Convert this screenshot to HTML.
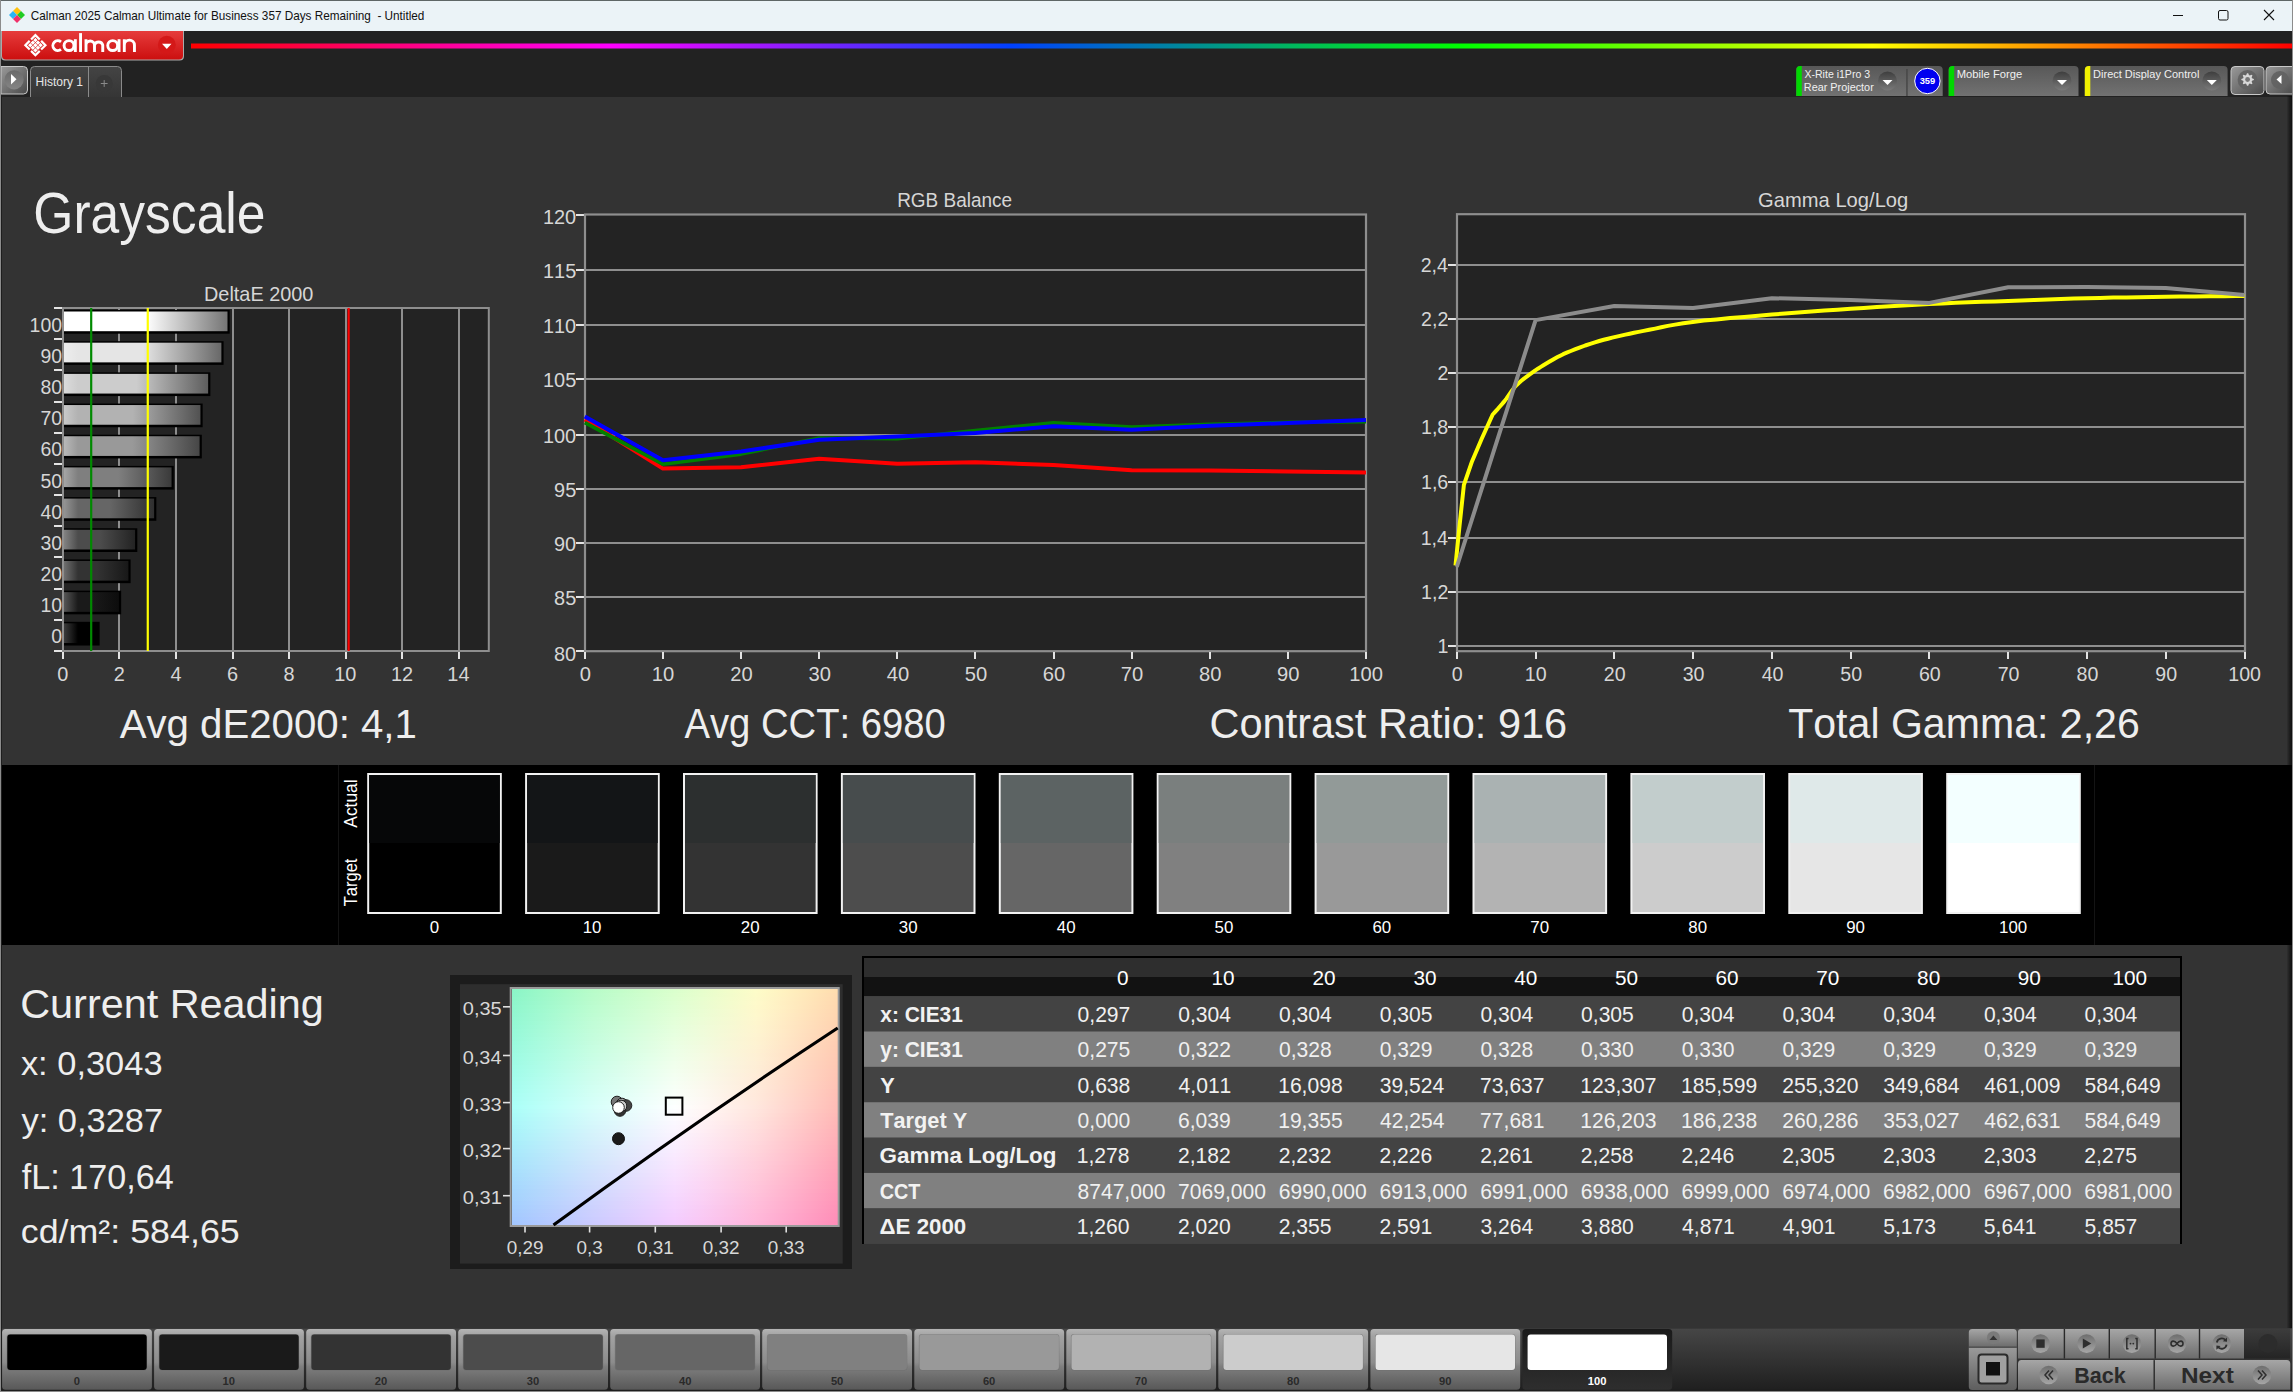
<!DOCTYPE html>
<html><head><meta charset="utf-8"><title>Calman</title>
<style>
html,body{margin:0;padding:0;background:#333;}
body{width:2293px;height:1392px;overflow:hidden;}
svg{display:block;font-family:"Liberation Sans",sans-serif;font-kerning:none;}
text{white-space:pre;}
</style></head><body>
<svg width="2293" height="1392" viewBox="0 0 2293 1392">
<defs>
<linearGradient id="redg" x1="0" y1="0" x2="0" y2="1"><stop offset="0" stop-color="#e63c3c"/><stop offset="1" stop-color="#cc0f0f"/></linearGradient>
<radialGradient id="ddred" cx="0.5" cy="0.5" r="0.5"><stop offset="0" stop-color="#d31c1c"/><stop offset="0.8" stop-color="#d82020"/><stop offset="1" stop-color="#e03a3a"/></radialGradient>
<linearGradient id="rainbow" x1="191" y1="0" x2="2293" y2="0" gradientUnits="userSpaceOnUse"><stop offset="0" stop-color="#ff0000"/><stop offset="0.2" stop-color="#ff00ff"/><stop offset="0.39" stop-color="#0040ff"/><stop offset="0.48" stop-color="#009090"/><stop offset="0.605" stop-color="#00ff00"/><stop offset="0.8" stop-color="#ffff00"/><stop offset="0.88" stop-color="#ff9900"/><stop offset="1" stop-color="#ff0000"/></linearGradient>
<linearGradient id="wg" x1="0" y1="0" x2="0" y2="1"><stop offset="0" stop-color="#585858"/><stop offset="1" stop-color="#727272"/></linearGradient>
<linearGradient id="ddc" x1="0" y1="0" x2="0" y2="1"><stop offset="0" stop-color="#3e3e3e"/><stop offset="1" stop-color="#7a7a7a"/></linearGradient>
<linearGradient id="btng" x1="0" y1="0" x2="1" y2="1"><stop offset="0" stop-color="#9a9a9a"/><stop offset="1" stop-color="#4a4a4a"/></linearGradient>
<radialGradient id="btnc" cx="0.5" cy="0.5" r="0.5"><stop offset="0" stop-color="#707070"/><stop offset="1" stop-color="#5a5a5a"/></radialGradient>
<linearGradient id="tabg" x1="0" y1="0" x2="0" y2="1"><stop offset="0" stop-color="#444"/><stop offset="1" stop-color="#353535"/></linearGradient>
<linearGradient id="pbc" x1="0" y1="0" x2="0" y2="1"><stop offset="0" stop-color="#6a6a6a"/><stop offset="1" stop-color="#858585"/></linearGradient>
<linearGradient id="bar0" x1="64" y1="0" x2="98.4" y2="0" gradientUnits="userSpaceOnUse"><stop offset="0" stop-color="#3c3c3c"/><stop offset="0.406" stop-color="#000000"/><stop offset="0.5" stop-color="#000000"/><stop offset="1" stop-color="#000000"/></linearGradient>
<linearGradient id="bar10" x1="64" y1="0" x2="119.9" y2="0" gradientUnits="userSpaceOnUse"><stop offset="0" stop-color="#565656"/><stop offset="0.250" stop-color="#1a1a1a"/><stop offset="0.5" stop-color="#1a1a1a"/><stop offset="1" stop-color="#0c0c0c"/></linearGradient>
<linearGradient id="bar20" x1="64" y1="0" x2="129.4" y2="0" gradientUnits="userSpaceOnUse"><stop offset="0" stop-color="#6f6f6f"/><stop offset="0.214" stop-color="#333333"/><stop offset="0.5" stop-color="#333333"/><stop offset="1" stop-color="#171717"/></linearGradient>
<linearGradient id="bar30" x1="64" y1="0" x2="136.1" y2="0" gradientUnits="userSpaceOnUse"><stop offset="0" stop-color="#828282"/><stop offset="0.194" stop-color="#4c4c4c"/><stop offset="0.5" stop-color="#4c4c4c"/><stop offset="1" stop-color="#222222"/></linearGradient>
<linearGradient id="bar40" x1="64" y1="0" x2="155.1" y2="0" gradientUnits="userSpaceOnUse"><stop offset="0" stop-color="#949494"/><stop offset="0.154" stop-color="#666666"/><stop offset="0.5" stop-color="#666666"/><stop offset="1" stop-color="#2e2e2e"/></linearGradient>
<linearGradient id="bar50" x1="64" y1="0" x2="172.6" y2="0" gradientUnits="userSpaceOnUse"><stop offset="0" stop-color="#a5a5a5"/><stop offset="0.129" stop-color="#7f7f7f"/><stop offset="0.5" stop-color="#7f7f7f"/><stop offset="1" stop-color="#393939"/></linearGradient>
<linearGradient id="bar60" x1="64" y1="0" x2="200.6" y2="0" gradientUnits="userSpaceOnUse"><stop offset="0" stop-color="#b8b8b8"/><stop offset="0.102" stop-color="#999999"/><stop offset="0.5" stop-color="#999999"/><stop offset="1" stop-color="#454545"/></linearGradient>
<linearGradient id="bar70" x1="64" y1="0" x2="201.4" y2="0" gradientUnits="userSpaceOnUse"><stop offset="0" stop-color="#c9c9c9"/><stop offset="0.102" stop-color="#b2b2b2"/><stop offset="0.5" stop-color="#b2b2b2"/><stop offset="1" stop-color="#505050"/></linearGradient>
<linearGradient id="bar80" x1="64" y1="0" x2="209.1" y2="0" gradientUnits="userSpaceOnUse"><stop offset="0" stop-color="#dbdbdb"/><stop offset="0.096" stop-color="#cccccc"/><stop offset="0.5" stop-color="#cccccc"/><stop offset="1" stop-color="#5c5c5c"/></linearGradient>
<linearGradient id="bar90" x1="64" y1="0" x2="222.4" y2="0" gradientUnits="userSpaceOnUse"><stop offset="0" stop-color="#ededed"/><stop offset="0.088" stop-color="#e5e5e5"/><stop offset="0.5" stop-color="#e5e5e5"/><stop offset="1" stop-color="#676767"/></linearGradient>
<linearGradient id="bar100" x1="64" y1="0" x2="228.5" y2="0" gradientUnits="userSpaceOnUse"><stop offset="0" stop-color="#ffffff"/><stop offset="0.085" stop-color="#ffffff"/><stop offset="0.5" stop-color="#ffffff"/><stop offset="1" stop-color="#737373"/></linearGradient>
<linearGradient id="cg0" x1="0" y1="0" x2="1" y2="0"><stop offset="0.000" stop-color="#8af5c7"/><stop offset="0.083" stop-color="#9af8c8"/><stop offset="0.167" stop-color="#a9fac8"/><stop offset="0.250" stop-color="#b8fcc9"/><stop offset="0.333" stop-color="#c3fdca"/><stop offset="0.417" stop-color="#cffecb"/><stop offset="0.500" stop-color="#daffcd"/><stop offset="0.583" stop-color="#e6fecc"/><stop offset="0.667" stop-color="#f2fdca"/><stop offset="0.750" stop-color="#fdfcc9"/><stop offset="0.833" stop-color="#fff2c0"/><stop offset="0.917" stop-color="#ffe7b7"/><stop offset="1.000" stop-color="#ffdcae"/></linearGradient>
<linearGradient id="cg1" x1="0" y1="0" x2="1" y2="0"><stop offset="0.000" stop-color="#8bf5c9"/><stop offset="0.083" stop-color="#9bf8c9"/><stop offset="0.167" stop-color="#aafaca"/><stop offset="0.250" stop-color="#b9fccb"/><stop offset="0.333" stop-color="#c5fdcc"/><stop offset="0.417" stop-color="#d0fecd"/><stop offset="0.500" stop-color="#dcffce"/><stop offset="0.583" stop-color="#e7fecd"/><stop offset="0.667" stop-color="#f2fccb"/><stop offset="0.750" stop-color="#fdfbc9"/><stop offset="0.833" stop-color="#fff1c1"/><stop offset="0.917" stop-color="#ffe6b8"/><stop offset="1.000" stop-color="#ffdaaf"/></linearGradient>
<linearGradient id="cg2" x1="0" y1="0" x2="1" y2="0"><stop offset="0.000" stop-color="#8df6ca"/><stop offset="0.083" stop-color="#9cf8cb"/><stop offset="0.167" stop-color="#abfacc"/><stop offset="0.250" stop-color="#bafccc"/><stop offset="0.333" stop-color="#c6fdce"/><stop offset="0.417" stop-color="#d1fecf"/><stop offset="0.500" stop-color="#ddffd0"/><stop offset="0.583" stop-color="#e8fecf"/><stop offset="0.667" stop-color="#f3fccc"/><stop offset="0.750" stop-color="#fdfaca"/><stop offset="0.833" stop-color="#fff0c2"/><stop offset="0.917" stop-color="#ffe5b8"/><stop offset="1.000" stop-color="#ffd9af"/></linearGradient>
<linearGradient id="cg3" x1="0" y1="0" x2="1" y2="0"><stop offset="0.000" stop-color="#8ef6cc"/><stop offset="0.083" stop-color="#9df8cd"/><stop offset="0.167" stop-color="#acfacd"/><stop offset="0.250" stop-color="#bbfcce"/><stop offset="0.333" stop-color="#c7fdcf"/><stop offset="0.417" stop-color="#d2fed1"/><stop offset="0.500" stop-color="#deffd2"/><stop offset="0.583" stop-color="#e9fdd0"/><stop offset="0.667" stop-color="#f3fccd"/><stop offset="0.750" stop-color="#fefacb"/><stop offset="0.833" stop-color="#ffefc2"/><stop offset="0.917" stop-color="#ffe4b9"/><stop offset="1.000" stop-color="#ffd8af"/></linearGradient>
<linearGradient id="cg4" x1="0" y1="0" x2="1" y2="0"><stop offset="0.000" stop-color="#8ff7ce"/><stop offset="0.083" stop-color="#9ef9ce"/><stop offset="0.167" stop-color="#adfbcf"/><stop offset="0.250" stop-color="#bcfdd0"/><stop offset="0.333" stop-color="#c8fdd1"/><stop offset="0.417" stop-color="#d3fed2"/><stop offset="0.500" stop-color="#dfffd4"/><stop offset="0.583" stop-color="#e9fdd1"/><stop offset="0.667" stop-color="#f4fbce"/><stop offset="0.750" stop-color="#fef9cb"/><stop offset="0.833" stop-color="#ffefc3"/><stop offset="0.917" stop-color="#ffe3b9"/><stop offset="1.000" stop-color="#ffd7af"/></linearGradient>
<linearGradient id="cg5" x1="0" y1="0" x2="1" y2="0"><stop offset="0.000" stop-color="#90f7cf"/><stop offset="0.083" stop-color="#9ff9d0"/><stop offset="0.167" stop-color="#aefbd1"/><stop offset="0.250" stop-color="#bdfdd1"/><stop offset="0.333" stop-color="#c9fdd3"/><stop offset="0.417" stop-color="#d5fed4"/><stop offset="0.500" stop-color="#e0ffd5"/><stop offset="0.583" stop-color="#eafdd3"/><stop offset="0.667" stop-color="#f4fbd0"/><stop offset="0.750" stop-color="#fef8cc"/><stop offset="0.833" stop-color="#ffeec3"/><stop offset="0.917" stop-color="#ffe2b9"/><stop offset="1.000" stop-color="#ffd6b0"/></linearGradient>
<linearGradient id="cg6" x1="0" y1="0" x2="1" y2="0"><stop offset="0.000" stop-color="#91f7d1"/><stop offset="0.083" stop-color="#a0f9d2"/><stop offset="0.167" stop-color="#b0fbd2"/><stop offset="0.250" stop-color="#befdd3"/><stop offset="0.333" stop-color="#cafdd4"/><stop offset="0.417" stop-color="#d6fed6"/><stop offset="0.500" stop-color="#e1ffd7"/><stop offset="0.583" stop-color="#ebfdd4"/><stop offset="0.667" stop-color="#f4fad1"/><stop offset="0.750" stop-color="#fef8cd"/><stop offset="0.833" stop-color="#ffedc4"/><stop offset="0.917" stop-color="#ffe1ba"/><stop offset="1.000" stop-color="#ffd5b0"/></linearGradient>
<linearGradient id="cg7" x1="0" y1="0" x2="1" y2="0"><stop offset="0.000" stop-color="#92f8d3"/><stop offset="0.083" stop-color="#a1f9d3"/><stop offset="0.167" stop-color="#b1fbd4"/><stop offset="0.250" stop-color="#c0fdd5"/><stop offset="0.333" stop-color="#cbfed6"/><stop offset="0.417" stop-color="#d7fed7"/><stop offset="0.500" stop-color="#e3ffd9"/><stop offset="0.583" stop-color="#ecfdd6"/><stop offset="0.667" stop-color="#f5fad2"/><stop offset="0.750" stop-color="#fef7ce"/><stop offset="0.833" stop-color="#ffecc4"/><stop offset="0.917" stop-color="#ffe0ba"/><stop offset="1.000" stop-color="#ffd4b0"/></linearGradient>
<linearGradient id="cg8" x1="0" y1="0" x2="1" y2="0"><stop offset="0.000" stop-color="#93f8d4"/><stop offset="0.083" stop-color="#a2fad5"/><stop offset="0.167" stop-color="#b2fbd6"/><stop offset="0.250" stop-color="#c1fdd7"/><stop offset="0.333" stop-color="#ccfed8"/><stop offset="0.417" stop-color="#d8fed9"/><stop offset="0.500" stop-color="#e4ffda"/><stop offset="0.583" stop-color="#edfcd7"/><stop offset="0.667" stop-color="#f5f9d3"/><stop offset="0.750" stop-color="#fef6ce"/><stop offset="0.833" stop-color="#ffebc5"/><stop offset="0.917" stop-color="#ffdfbb"/><stop offset="1.000" stop-color="#ffd3b0"/></linearGradient>
<linearGradient id="cg9" x1="0" y1="0" x2="1" y2="0"><stop offset="0.000" stop-color="#94f8d6"/><stop offset="0.083" stop-color="#a3fad7"/><stop offset="0.167" stop-color="#b3fcd7"/><stop offset="0.250" stop-color="#c2fdd8"/><stop offset="0.333" stop-color="#cdfeda"/><stop offset="0.417" stop-color="#d9fedb"/><stop offset="0.500" stop-color="#e5ffdc"/><stop offset="0.583" stop-color="#eefcd9"/><stop offset="0.667" stop-color="#f6f9d4"/><stop offset="0.750" stop-color="#fef5cf"/><stop offset="0.833" stop-color="#ffeac5"/><stop offset="0.917" stop-color="#ffdebb"/><stop offset="1.000" stop-color="#ffd2b1"/></linearGradient>
<linearGradient id="cg10" x1="0" y1="0" x2="1" y2="0"><stop offset="0.000" stop-color="#95f9d8"/><stop offset="0.083" stop-color="#a5fad8"/><stop offset="0.167" stop-color="#b4fcd9"/><stop offset="0.250" stop-color="#c3fdda"/><stop offset="0.333" stop-color="#cffedb"/><stop offset="0.417" stop-color="#dafedd"/><stop offset="0.500" stop-color="#e6ffde"/><stop offset="0.583" stop-color="#effcda"/><stop offset="0.667" stop-color="#f6f8d5"/><stop offset="0.750" stop-color="#fef5d0"/><stop offset="0.833" stop-color="#ffeac6"/><stop offset="0.917" stop-color="#ffddbc"/><stop offset="1.000" stop-color="#ffd1b1"/></linearGradient>
<linearGradient id="cg11" x1="0" y1="0" x2="1" y2="0"><stop offset="0.000" stop-color="#96f9d9"/><stop offset="0.083" stop-color="#a6fada"/><stop offset="0.167" stop-color="#b5fcdb"/><stop offset="0.250" stop-color="#c4fddc"/><stop offset="0.333" stop-color="#d0fedd"/><stop offset="0.417" stop-color="#dcfede"/><stop offset="0.500" stop-color="#e7ffe0"/><stop offset="0.583" stop-color="#effcdb"/><stop offset="0.667" stop-color="#f7f8d6"/><stop offset="0.750" stop-color="#fef4d1"/><stop offset="0.833" stop-color="#ffe9c7"/><stop offset="0.917" stop-color="#ffdcbc"/><stop offset="1.000" stop-color="#ffd0b1"/></linearGradient>
<linearGradient id="cg12" x1="0" y1="0" x2="1" y2="0"><stop offset="0.000" stop-color="#97f9db"/><stop offset="0.083" stop-color="#a7fbdc"/><stop offset="0.167" stop-color="#b6fcdd"/><stop offset="0.250" stop-color="#c5fddd"/><stop offset="0.333" stop-color="#d1fedf"/><stop offset="0.417" stop-color="#ddfee0"/><stop offset="0.500" stop-color="#e9ffe1"/><stop offset="0.583" stop-color="#f0fcdd"/><stop offset="0.667" stop-color="#f7f7d7"/><stop offset="0.750" stop-color="#fef3d1"/><stop offset="0.833" stop-color="#ffe8c7"/><stop offset="0.917" stop-color="#ffdbbc"/><stop offset="1.000" stop-color="#ffcfb2"/></linearGradient>
<linearGradient id="cg13" x1="0" y1="0" x2="1" y2="0"><stop offset="0.000" stop-color="#98fadd"/><stop offset="0.083" stop-color="#a8fbde"/><stop offset="0.167" stop-color="#b7fcde"/><stop offset="0.250" stop-color="#c6fddf"/><stop offset="0.333" stop-color="#d2fee0"/><stop offset="0.417" stop-color="#defee2"/><stop offset="0.500" stop-color="#eaffe3"/><stop offset="0.583" stop-color="#f1fbde"/><stop offset="0.667" stop-color="#f8f7d8"/><stop offset="0.750" stop-color="#fef3d2"/><stop offset="0.833" stop-color="#ffe7c8"/><stop offset="0.917" stop-color="#ffdabd"/><stop offset="1.000" stop-color="#ffcdb2"/></linearGradient>
<linearGradient id="cg14" x1="0" y1="0" x2="1" y2="0"><stop offset="0.000" stop-color="#9afadf"/><stop offset="0.083" stop-color="#a9fbdf"/><stop offset="0.167" stop-color="#b8fce0"/><stop offset="0.250" stop-color="#c7fee1"/><stop offset="0.333" stop-color="#d3fee2"/><stop offset="0.417" stop-color="#dffee3"/><stop offset="0.500" stop-color="#ebffe5"/><stop offset="0.583" stop-color="#f2fbe0"/><stop offset="0.667" stop-color="#f8f7d9"/><stop offset="0.750" stop-color="#fef2d3"/><stop offset="0.833" stop-color="#ffe6c8"/><stop offset="0.917" stop-color="#ffd9bd"/><stop offset="1.000" stop-color="#ffccb2"/></linearGradient>
<linearGradient id="cg15" x1="0" y1="0" x2="1" y2="0"><stop offset="0.000" stop-color="#9bfae0"/><stop offset="0.083" stop-color="#aafbe1"/><stop offset="0.167" stop-color="#b9fde2"/><stop offset="0.250" stop-color="#c8fee2"/><stop offset="0.333" stop-color="#d4fee4"/><stop offset="0.417" stop-color="#e0fee5"/><stop offset="0.500" stop-color="#ecffe7"/><stop offset="0.583" stop-color="#f3fbe1"/><stop offset="0.667" stop-color="#f9f6da"/><stop offset="0.750" stop-color="#fef1d3"/><stop offset="0.833" stop-color="#ffe5c9"/><stop offset="0.917" stop-color="#ffd8be"/><stop offset="1.000" stop-color="#ffcbb2"/></linearGradient>
<linearGradient id="cg16" x1="0" y1="0" x2="1" y2="0"><stop offset="0.000" stop-color="#9cfbe2"/><stop offset="0.083" stop-color="#abfce3"/><stop offset="0.167" stop-color="#bafde3"/><stop offset="0.250" stop-color="#c9fee4"/><stop offset="0.333" stop-color="#d5fee6"/><stop offset="0.417" stop-color="#e1ffe7"/><stop offset="0.500" stop-color="#edffe8"/><stop offset="0.583" stop-color="#f4fbe3"/><stop offset="0.667" stop-color="#f9f6db"/><stop offset="0.750" stop-color="#fef0d4"/><stop offset="0.833" stop-color="#ffe4c9"/><stop offset="0.917" stop-color="#ffd7be"/><stop offset="1.000" stop-color="#ffcab3"/></linearGradient>
<linearGradient id="cg17" x1="0" y1="0" x2="1" y2="0"><stop offset="0.000" stop-color="#9dfbe4"/><stop offset="0.083" stop-color="#acfce4"/><stop offset="0.167" stop-color="#bbfde5"/><stop offset="0.250" stop-color="#cafee6"/><stop offset="0.333" stop-color="#d6fee7"/><stop offset="0.417" stop-color="#e2ffe9"/><stop offset="0.500" stop-color="#eeffea"/><stop offset="0.583" stop-color="#f5fbe4"/><stop offset="0.667" stop-color="#f9f5dd"/><stop offset="0.750" stop-color="#fef0d5"/><stop offset="0.833" stop-color="#ffe4ca"/><stop offset="0.917" stop-color="#ffd6be"/><stop offset="1.000" stop-color="#ffc9b3"/></linearGradient>
<linearGradient id="cg18" x1="0" y1="0" x2="1" y2="0"><stop offset="0.000" stop-color="#9efbe5"/><stop offset="0.083" stop-color="#adfce6"/><stop offset="0.167" stop-color="#bdfde7"/><stop offset="0.250" stop-color="#cbfee8"/><stop offset="0.333" stop-color="#d8fee9"/><stop offset="0.417" stop-color="#e4ffea"/><stop offset="0.500" stop-color="#f0ffec"/><stop offset="0.583" stop-color="#f6fae6"/><stop offset="0.667" stop-color="#faf5de"/><stop offset="0.750" stop-color="#feefd6"/><stop offset="0.833" stop-color="#ffe3ca"/><stop offset="0.917" stop-color="#ffd5bf"/><stop offset="1.000" stop-color="#ffc8b3"/></linearGradient>
<linearGradient id="cg19" x1="0" y1="0" x2="1" y2="0"><stop offset="0.000" stop-color="#9ffce7"/><stop offset="0.083" stop-color="#aefce8"/><stop offset="0.167" stop-color="#befde8"/><stop offset="0.250" stop-color="#cdfee9"/><stop offset="0.333" stop-color="#d9feeb"/><stop offset="0.417" stop-color="#e5ffec"/><stop offset="0.500" stop-color="#f1ffed"/><stop offset="0.583" stop-color="#f6fae7"/><stop offset="0.667" stop-color="#faf4df"/><stop offset="0.750" stop-color="#feeed6"/><stop offset="0.833" stop-color="#ffe2cb"/><stop offset="0.917" stop-color="#ffd4bf"/><stop offset="1.000" stop-color="#ffc7b3"/></linearGradient>
<linearGradient id="cg20" x1="0" y1="0" x2="1" y2="0"><stop offset="0.000" stop-color="#a0fce9"/><stop offset="0.083" stop-color="#affde9"/><stop offset="0.167" stop-color="#bffdea"/><stop offset="0.250" stop-color="#cefeeb"/><stop offset="0.333" stop-color="#dafeec"/><stop offset="0.417" stop-color="#e6ffee"/><stop offset="0.500" stop-color="#f2ffef"/><stop offset="0.583" stop-color="#f7fae8"/><stop offset="0.667" stop-color="#fbf4e0"/><stop offset="0.750" stop-color="#feeed7"/><stop offset="0.833" stop-color="#ffe1cc"/><stop offset="0.917" stop-color="#ffd3c0"/><stop offset="1.000" stop-color="#ffc6b4"/></linearGradient>
<linearGradient id="cg21" x1="0" y1="0" x2="1" y2="0"><stop offset="0.000" stop-color="#a1fcea"/><stop offset="0.083" stop-color="#b0fdeb"/><stop offset="0.167" stop-color="#c0feec"/><stop offset="0.250" stop-color="#cffeed"/><stop offset="0.333" stop-color="#dbfeee"/><stop offset="0.417" stop-color="#e7ffef"/><stop offset="0.500" stop-color="#f3fff1"/><stop offset="0.583" stop-color="#f8faea"/><stop offset="0.667" stop-color="#fbf3e1"/><stop offset="0.750" stop-color="#ffedd8"/><stop offset="0.833" stop-color="#ffe0cc"/><stop offset="0.917" stop-color="#ffd3c0"/><stop offset="1.000" stop-color="#ffc5b4"/></linearGradient>
<linearGradient id="cg22" x1="0" y1="0" x2="1" y2="0"><stop offset="0.000" stop-color="#a2fdec"/><stop offset="0.083" stop-color="#b2fded"/><stop offset="0.167" stop-color="#c1feee"/><stop offset="0.250" stop-color="#d0feee"/><stop offset="0.333" stop-color="#dcfff0"/><stop offset="0.417" stop-color="#e8fff1"/><stop offset="0.500" stop-color="#f4fff3"/><stop offset="0.583" stop-color="#f9faeb"/><stop offset="0.667" stop-color="#fcf3e2"/><stop offset="0.750" stop-color="#ffecd9"/><stop offset="0.833" stop-color="#ffdfcd"/><stop offset="0.917" stop-color="#ffd2c0"/><stop offset="1.000" stop-color="#ffc4b4"/></linearGradient>
<linearGradient id="cg23" x1="0" y1="0" x2="1" y2="0"><stop offset="0.000" stop-color="#a3fdee"/><stop offset="0.083" stop-color="#b3fdef"/><stop offset="0.167" stop-color="#c2feef"/><stop offset="0.250" stop-color="#d1fef0"/><stop offset="0.333" stop-color="#ddfff1"/><stop offset="0.417" stop-color="#e9fff3"/><stop offset="0.500" stop-color="#f6fff4"/><stop offset="0.583" stop-color="#faf9ed"/><stop offset="0.667" stop-color="#fcf2e3"/><stop offset="0.750" stop-color="#ffebd9"/><stop offset="0.833" stop-color="#ffdfcd"/><stop offset="0.917" stop-color="#ffd1c1"/><stop offset="1.000" stop-color="#ffc3b5"/></linearGradient>
<linearGradient id="cg24" x1="0" y1="0" x2="1" y2="0"><stop offset="0.000" stop-color="#a4fdf0"/><stop offset="0.083" stop-color="#b4fef0"/><stop offset="0.167" stop-color="#c3fef1"/><stop offset="0.250" stop-color="#d2fff2"/><stop offset="0.333" stop-color="#defff3"/><stop offset="0.417" stop-color="#eafff5"/><stop offset="0.500" stop-color="#f7fff6"/><stop offset="0.583" stop-color="#fbf9ee"/><stop offset="0.667" stop-color="#fdf2e4"/><stop offset="0.750" stop-color="#ffebda"/><stop offset="0.833" stop-color="#ffdece"/><stop offset="0.917" stop-color="#ffd0c1"/><stop offset="1.000" stop-color="#ffc2b5"/></linearGradient>
<linearGradient id="cg25" x1="0" y1="0" x2="1" y2="0"><stop offset="0.000" stop-color="#a5fef1"/><stop offset="0.083" stop-color="#b5fef2"/><stop offset="0.167" stop-color="#c4fef3"/><stop offset="0.250" stop-color="#d3fff3"/><stop offset="0.333" stop-color="#dffff5"/><stop offset="0.417" stop-color="#ecfff6"/><stop offset="0.500" stop-color="#f8fff8"/><stop offset="0.583" stop-color="#fcf9f0"/><stop offset="0.667" stop-color="#fdf2e5"/><stop offset="0.750" stop-color="#ffeadb"/><stop offset="0.833" stop-color="#ffddce"/><stop offset="0.917" stop-color="#ffcfc2"/><stop offset="1.000" stop-color="#ffc0b5"/></linearGradient>
<linearGradient id="cg26" x1="0" y1="0" x2="1" y2="0"><stop offset="0.000" stop-color="#a7fef3"/><stop offset="0.083" stop-color="#b6fef4"/><stop offset="0.167" stop-color="#c5fef4"/><stop offset="0.250" stop-color="#d4fff5"/><stop offset="0.333" stop-color="#e0fff7"/><stop offset="0.417" stop-color="#edfff8"/><stop offset="0.500" stop-color="#f9fffa"/><stop offset="0.583" stop-color="#fcf9f1"/><stop offset="0.667" stop-color="#fef1e6"/><stop offset="0.750" stop-color="#ffe9db"/><stop offset="0.833" stop-color="#ffdccf"/><stop offset="0.917" stop-color="#ffcec2"/><stop offset="1.000" stop-color="#ffbfb5"/></linearGradient>
<linearGradient id="cg27" x1="0" y1="0" x2="1" y2="0"><stop offset="0.000" stop-color="#a8fef5"/><stop offset="0.083" stop-color="#b7fef5"/><stop offset="0.167" stop-color="#c6fff6"/><stop offset="0.250" stop-color="#d5fff7"/><stop offset="0.333" stop-color="#e2fff8"/><stop offset="0.417" stop-color="#eefffa"/><stop offset="0.500" stop-color="#fafffb"/><stop offset="0.583" stop-color="#fdf9f3"/><stop offset="0.667" stop-color="#fef1e7"/><stop offset="0.750" stop-color="#ffe9dc"/><stop offset="0.833" stop-color="#ffdbd0"/><stop offset="0.917" stop-color="#ffcdc3"/><stop offset="1.000" stop-color="#ffbeb6"/></linearGradient>
<linearGradient id="cg28" x1="0" y1="0" x2="1" y2="0"><stop offset="0.000" stop-color="#a9fff6"/><stop offset="0.083" stop-color="#b8fff7"/><stop offset="0.167" stop-color="#c7fff8"/><stop offset="0.250" stop-color="#d6fff8"/><stop offset="0.333" stop-color="#e3fffa"/><stop offset="0.417" stop-color="#effffb"/><stop offset="0.500" stop-color="#fbfffd"/><stop offset="0.583" stop-color="#fef8f4"/><stop offset="0.667" stop-color="#fff0e8"/><stop offset="0.750" stop-color="#ffe8dd"/><stop offset="0.833" stop-color="#ffdad0"/><stop offset="0.917" stop-color="#ffccc3"/><stop offset="1.000" stop-color="#ffbdb6"/></linearGradient>
<linearGradient id="cg29" x1="0" y1="0" x2="1" y2="0"><stop offset="0.000" stop-color="#aafff8"/><stop offset="0.083" stop-color="#b9fff9"/><stop offset="0.167" stop-color="#c8fff9"/><stop offset="0.250" stop-color="#d7fffa"/><stop offset="0.333" stop-color="#e4fffc"/><stop offset="0.417" stop-color="#f0fffd"/><stop offset="0.500" stop-color="#fdffff"/><stop offset="0.583" stop-color="#fff8f5"/><stop offset="0.667" stop-color="#fff0ea"/><stop offset="0.750" stop-color="#ffe7de"/><stop offset="0.833" stop-color="#ffd9d1"/><stop offset="0.917" stop-color="#ffcbc3"/><stop offset="1.000" stop-color="#ffbcb6"/></linearGradient>
<linearGradient id="cg30" x1="0" y1="0" x2="1" y2="0"><stop offset="0.000" stop-color="#aafdf8"/><stop offset="0.083" stop-color="#b9fdf9"/><stop offset="0.167" stop-color="#c8fdfa"/><stop offset="0.250" stop-color="#d7fdfa"/><stop offset="0.333" stop-color="#e3fdfc"/><stop offset="0.417" stop-color="#f0fdfd"/><stop offset="0.500" stop-color="#fcfdff"/><stop offset="0.583" stop-color="#fff6f5"/><stop offset="0.667" stop-color="#ffeee9"/><stop offset="0.750" stop-color="#ffe5de"/><stop offset="0.833" stop-color="#ffd8d1"/><stop offset="0.917" stop-color="#ffc9c3"/><stop offset="1.000" stop-color="#ffbbb6"/></linearGradient>
<linearGradient id="cg31" x1="0" y1="0" x2="1" y2="0"><stop offset="0.000" stop-color="#a9fbf8"/><stop offset="0.083" stop-color="#b9fbf9"/><stop offset="0.167" stop-color="#c8fbfa"/><stop offset="0.250" stop-color="#d7fbfb"/><stop offset="0.333" stop-color="#e3fbfc"/><stop offset="0.417" stop-color="#f0fbfd"/><stop offset="0.500" stop-color="#fcfcff"/><stop offset="0.583" stop-color="#fff5f5"/><stop offset="0.667" stop-color="#ffece9"/><stop offset="0.750" stop-color="#ffe4dd"/><stop offset="0.833" stop-color="#ffd6d0"/><stop offset="0.917" stop-color="#ffc7c3"/><stop offset="1.000" stop-color="#ffb9b6"/></linearGradient>
<linearGradient id="cg32" x1="0" y1="0" x2="1" y2="0"><stop offset="0.000" stop-color="#a9f9f9"/><stop offset="0.083" stop-color="#b8f9f9"/><stop offset="0.167" stop-color="#c7f9fa"/><stop offset="0.250" stop-color="#d6fafb"/><stop offset="0.333" stop-color="#e3fafc"/><stop offset="0.417" stop-color="#effafd"/><stop offset="0.500" stop-color="#fcfaff"/><stop offset="0.583" stop-color="#fef3f5"/><stop offset="0.667" stop-color="#ffebe9"/><stop offset="0.750" stop-color="#ffe2dd"/><stop offset="0.833" stop-color="#ffd4d0"/><stop offset="0.917" stop-color="#ffc6c3"/><stop offset="1.000" stop-color="#ffb7b6"/></linearGradient>
<linearGradient id="cg33" x1="0" y1="0" x2="1" y2="0"><stop offset="0.000" stop-color="#a9f7f9"/><stop offset="0.083" stop-color="#b8f7fa"/><stop offset="0.167" stop-color="#c7f8fa"/><stop offset="0.250" stop-color="#d6f8fb"/><stop offset="0.333" stop-color="#e2f8fc"/><stop offset="0.417" stop-color="#eff8fd"/><stop offset="0.500" stop-color="#fbf8ff"/><stop offset="0.583" stop-color="#fef1f5"/><stop offset="0.667" stop-color="#ffe9e9"/><stop offset="0.750" stop-color="#ffe0dd"/><stop offset="0.833" stop-color="#ffd3d0"/><stop offset="0.917" stop-color="#ffc4c3"/><stop offset="1.000" stop-color="#ffb6b6"/></linearGradient>
<linearGradient id="cg34" x1="0" y1="0" x2="1" y2="0"><stop offset="0.000" stop-color="#a8f5f9"/><stop offset="0.083" stop-color="#b8f6fa"/><stop offset="0.167" stop-color="#c7f6fa"/><stop offset="0.250" stop-color="#d5f6fb"/><stop offset="0.333" stop-color="#e2f6fc"/><stop offset="0.417" stop-color="#eff6fe"/><stop offset="0.500" stop-color="#fbf6ff"/><stop offset="0.583" stop-color="#fef0f5"/><stop offset="0.667" stop-color="#fee7e9"/><stop offset="0.750" stop-color="#ffdfdd"/><stop offset="0.833" stop-color="#ffd1d0"/><stop offset="0.917" stop-color="#ffc3c3"/><stop offset="1.000" stop-color="#ffb4b6"/></linearGradient>
<linearGradient id="cg35" x1="0" y1="0" x2="1" y2="0"><stop offset="0.000" stop-color="#a8f3f9"/><stop offset="0.083" stop-color="#b7f4fa"/><stop offset="0.167" stop-color="#c6f4fb"/><stop offset="0.250" stop-color="#d5f4fb"/><stop offset="0.333" stop-color="#e2f4fc"/><stop offset="0.417" stop-color="#eef4fe"/><stop offset="0.500" stop-color="#fbf5ff"/><stop offset="0.583" stop-color="#feeef5"/><stop offset="0.667" stop-color="#fee5e9"/><stop offset="0.750" stop-color="#ffdddd"/><stop offset="0.833" stop-color="#ffcfd0"/><stop offset="0.917" stop-color="#ffc1c3"/><stop offset="1.000" stop-color="#ffb2b7"/></linearGradient>
<linearGradient id="cg36" x1="0" y1="0" x2="1" y2="0"><stop offset="0.000" stop-color="#a8f1fa"/><stop offset="0.083" stop-color="#b7f2fa"/><stop offset="0.167" stop-color="#c6f2fb"/><stop offset="0.250" stop-color="#d5f2fb"/><stop offset="0.333" stop-color="#e1f3fc"/><stop offset="0.417" stop-color="#eef3fe"/><stop offset="0.500" stop-color="#faf3ff"/><stop offset="0.583" stop-color="#fdecf5"/><stop offset="0.667" stop-color="#fee4e9"/><stop offset="0.750" stop-color="#ffdbdd"/><stop offset="0.833" stop-color="#ffced0"/><stop offset="0.917" stop-color="#ffbfc3"/><stop offset="1.000" stop-color="#ffb1b7"/></linearGradient>
<linearGradient id="cg37" x1="0" y1="0" x2="1" y2="0"><stop offset="0.000" stop-color="#a8f0fa"/><stop offset="0.083" stop-color="#b7f0fa"/><stop offset="0.167" stop-color="#c6f0fb"/><stop offset="0.250" stop-color="#d4f1fb"/><stop offset="0.333" stop-color="#e1f1fd"/><stop offset="0.417" stop-color="#edf1fe"/><stop offset="0.500" stop-color="#faf1ff"/><stop offset="0.583" stop-color="#fdeaf5"/><stop offset="0.667" stop-color="#fee2e9"/><stop offset="0.750" stop-color="#ffdadd"/><stop offset="0.833" stop-color="#ffccd0"/><stop offset="0.917" stop-color="#ffbec3"/><stop offset="1.000" stop-color="#ffafb7"/></linearGradient>
<linearGradient id="cg38" x1="0" y1="0" x2="1" y2="0"><stop offset="0.000" stop-color="#a7eefa"/><stop offset="0.083" stop-color="#b6eefb"/><stop offset="0.167" stop-color="#c5eefb"/><stop offset="0.250" stop-color="#d4effc"/><stop offset="0.333" stop-color="#e0effd"/><stop offset="0.417" stop-color="#edeffe"/><stop offset="0.500" stop-color="#faefff"/><stop offset="0.583" stop-color="#fde9f5"/><stop offset="0.667" stop-color="#fee0e9"/><stop offset="0.750" stop-color="#ffd8dd"/><stop offset="0.833" stop-color="#ffcad0"/><stop offset="0.917" stop-color="#ffbcc3"/><stop offset="1.000" stop-color="#ffaeb7"/></linearGradient>
<linearGradient id="cg39" x1="0" y1="0" x2="1" y2="0"><stop offset="0.000" stop-color="#a7ecfa"/><stop offset="0.083" stop-color="#b6ecfb"/><stop offset="0.167" stop-color="#c5edfb"/><stop offset="0.250" stop-color="#d3edfc"/><stop offset="0.333" stop-color="#e0edfd"/><stop offset="0.417" stop-color="#ededfe"/><stop offset="0.500" stop-color="#f9eeff"/><stop offset="0.583" stop-color="#fde7f5"/><stop offset="0.667" stop-color="#fedfe9"/><stop offset="0.750" stop-color="#ffd6dc"/><stop offset="0.833" stop-color="#ffc9d0"/><stop offset="0.917" stop-color="#ffbac3"/><stop offset="1.000" stop-color="#ffacb7"/></linearGradient>
<linearGradient id="cg40" x1="0" y1="0" x2="1" y2="0"><stop offset="0.000" stop-color="#a7eafb"/><stop offset="0.083" stop-color="#b6eafb"/><stop offset="0.167" stop-color="#c4ebfb"/><stop offset="0.250" stop-color="#d3ebfc"/><stop offset="0.333" stop-color="#e0ebfd"/><stop offset="0.417" stop-color="#ececfe"/><stop offset="0.500" stop-color="#f9ecff"/><stop offset="0.583" stop-color="#fde5f5"/><stop offset="0.667" stop-color="#fedde9"/><stop offset="0.750" stop-color="#ffd5dc"/><stop offset="0.833" stop-color="#ffc7d0"/><stop offset="0.917" stop-color="#ffb9c3"/><stop offset="1.000" stop-color="#ffaab7"/></linearGradient>
<linearGradient id="cg41" x1="0" y1="0" x2="1" y2="0"><stop offset="0.000" stop-color="#a7e8fb"/><stop offset="0.083" stop-color="#b5e8fb"/><stop offset="0.167" stop-color="#c4e9fc"/><stop offset="0.250" stop-color="#d3e9fc"/><stop offset="0.333" stop-color="#dfeafd"/><stop offset="0.417" stop-color="#eceafe"/><stop offset="0.500" stop-color="#f9eaff"/><stop offset="0.583" stop-color="#fce4f5"/><stop offset="0.667" stop-color="#fedbe9"/><stop offset="0.750" stop-color="#ffd3dc"/><stop offset="0.833" stop-color="#ffc5d0"/><stop offset="0.917" stop-color="#ffb7c3"/><stop offset="1.000" stop-color="#ffa9b7"/></linearGradient>
<linearGradient id="cg42" x1="0" y1="0" x2="1" y2="0"><stop offset="0.000" stop-color="#a6e6fb"/><stop offset="0.083" stop-color="#b5e6fb"/><stop offset="0.167" stop-color="#c4e7fc"/><stop offset="0.250" stop-color="#d2e8fc"/><stop offset="0.333" stop-color="#dfe8fd"/><stop offset="0.417" stop-color="#ece8fe"/><stop offset="0.500" stop-color="#f9e8ff"/><stop offset="0.583" stop-color="#fce2f5"/><stop offset="0.667" stop-color="#fdd9e8"/><stop offset="0.750" stop-color="#ffd1dc"/><stop offset="0.833" stop-color="#ffc4d0"/><stop offset="0.917" stop-color="#ffb5c3"/><stop offset="1.000" stop-color="#ffa7b7"/></linearGradient>
<linearGradient id="cg43" x1="0" y1="0" x2="1" y2="0"><stop offset="0.000" stop-color="#a6e4fb"/><stop offset="0.083" stop-color="#b5e5fc"/><stop offset="0.167" stop-color="#c3e5fc"/><stop offset="0.250" stop-color="#d2e6fc"/><stop offset="0.333" stop-color="#dfe6fd"/><stop offset="0.417" stop-color="#ebe6fe"/><stop offset="0.500" stop-color="#f8e7ff"/><stop offset="0.583" stop-color="#fce0f5"/><stop offset="0.667" stop-color="#fdd8e8"/><stop offset="0.750" stop-color="#ffcfdc"/><stop offset="0.833" stop-color="#ffc2d0"/><stop offset="0.917" stop-color="#ffb4c3"/><stop offset="1.000" stop-color="#ffa5b7"/></linearGradient>
<linearGradient id="cg44" x1="0" y1="0" x2="1" y2="0"><stop offset="0.000" stop-color="#a6e2fc"/><stop offset="0.083" stop-color="#b4e3fc"/><stop offset="0.167" stop-color="#c3e3fc"/><stop offset="0.250" stop-color="#d1e4fd"/><stop offset="0.333" stop-color="#dee4fd"/><stop offset="0.417" stop-color="#ebe5fe"/><stop offset="0.500" stop-color="#f8e5ff"/><stop offset="0.583" stop-color="#fcdef5"/><stop offset="0.667" stop-color="#fdd6e8"/><stop offset="0.750" stop-color="#ffcedc"/><stop offset="0.833" stop-color="#ffc0cf"/><stop offset="0.917" stop-color="#ffb2c3"/><stop offset="1.000" stop-color="#ffa4b7"/></linearGradient>
<linearGradient id="cg45" x1="0" y1="0" x2="1" y2="0"><stop offset="0.000" stop-color="#a6e0fc"/><stop offset="0.083" stop-color="#b4e1fc"/><stop offset="0.167" stop-color="#c3e2fc"/><stop offset="0.250" stop-color="#d1e2fd"/><stop offset="0.333" stop-color="#dee3fd"/><stop offset="0.417" stop-color="#ebe3fe"/><stop offset="0.500" stop-color="#f8e3ff"/><stop offset="0.583" stop-color="#fbddf5"/><stop offset="0.667" stop-color="#fdd4e8"/><stop offset="0.750" stop-color="#ffccdc"/><stop offset="0.833" stop-color="#ffbfcf"/><stop offset="0.917" stop-color="#ffb0c3"/><stop offset="1.000" stop-color="#ffa2b7"/></linearGradient>
<linearGradient id="cg46" x1="0" y1="0" x2="1" y2="0"><stop offset="0.000" stop-color="#a5defc"/><stop offset="0.083" stop-color="#b4dffc"/><stop offset="0.167" stop-color="#c2e0fd"/><stop offset="0.250" stop-color="#d1e0fd"/><stop offset="0.333" stop-color="#dee1fe"/><stop offset="0.417" stop-color="#eae1fe"/><stop offset="0.500" stop-color="#f7e2ff"/><stop offset="0.583" stop-color="#fbdbf5"/><stop offset="0.667" stop-color="#fdd3e8"/><stop offset="0.750" stop-color="#ffcadb"/><stop offset="0.833" stop-color="#ffbdcf"/><stop offset="0.917" stop-color="#ffafc3"/><stop offset="1.000" stop-color="#ffa0b7"/></linearGradient>
<linearGradient id="cg47" x1="0" y1="0" x2="1" y2="0"><stop offset="0.000" stop-color="#a5dcfc"/><stop offset="0.083" stop-color="#b3ddfd"/><stop offset="0.167" stop-color="#c2defd"/><stop offset="0.250" stop-color="#d0dffd"/><stop offset="0.333" stop-color="#dddffe"/><stop offset="0.417" stop-color="#eadffe"/><stop offset="0.500" stop-color="#f7e0ff"/><stop offset="0.583" stop-color="#fbd9f5"/><stop offset="0.667" stop-color="#fdd1e8"/><stop offset="0.750" stop-color="#ffc9db"/><stop offset="0.833" stop-color="#ffbbcf"/><stop offset="0.917" stop-color="#ffadc3"/><stop offset="1.000" stop-color="#ff9fb7"/></linearGradient>
<linearGradient id="cg48" x1="0" y1="0" x2="1" y2="0"><stop offset="0.000" stop-color="#a5dafd"/><stop offset="0.083" stop-color="#b3dbfd"/><stop offset="0.167" stop-color="#c2dcfd"/><stop offset="0.250" stop-color="#d0ddfd"/><stop offset="0.333" stop-color="#ddddfe"/><stop offset="0.417" stop-color="#eadefe"/><stop offset="0.500" stop-color="#f7deff"/><stop offset="0.583" stop-color="#fbd7f5"/><stop offset="0.667" stop-color="#fdcfe8"/><stop offset="0.750" stop-color="#ffc7db"/><stop offset="0.833" stop-color="#ffbacf"/><stop offset="0.917" stop-color="#ffabc3"/><stop offset="1.000" stop-color="#ff9db7"/></linearGradient>
<linearGradient id="cg49" x1="0" y1="0" x2="1" y2="0"><stop offset="0.000" stop-color="#a4d8fd"/><stop offset="0.083" stop-color="#b3d9fd"/><stop offset="0.167" stop-color="#c1dafd"/><stop offset="0.250" stop-color="#cfdbfd"/><stop offset="0.333" stop-color="#dcdcfe"/><stop offset="0.417" stop-color="#e9dcfe"/><stop offset="0.500" stop-color="#f6dcff"/><stop offset="0.583" stop-color="#fbd6f5"/><stop offset="0.667" stop-color="#fdcee8"/><stop offset="0.750" stop-color="#ffc5db"/><stop offset="0.833" stop-color="#ffb8cf"/><stop offset="0.917" stop-color="#ffaac3"/><stop offset="1.000" stop-color="#ff9cb7"/></linearGradient>
<linearGradient id="cg50" x1="0" y1="0" x2="1" y2="0"><stop offset="0.000" stop-color="#a4d6fd"/><stop offset="0.083" stop-color="#b2d7fd"/><stop offset="0.167" stop-color="#c1d8fd"/><stop offset="0.250" stop-color="#cfd9fe"/><stop offset="0.333" stop-color="#dcdafe"/><stop offset="0.417" stop-color="#e9dafe"/><stop offset="0.500" stop-color="#f6dbff"/><stop offset="0.583" stop-color="#fad4f5"/><stop offset="0.667" stop-color="#fdcce8"/><stop offset="0.750" stop-color="#ffc4db"/><stop offset="0.833" stop-color="#ffb6cf"/><stop offset="0.917" stop-color="#ffa8c3"/><stop offset="1.000" stop-color="#ff9ab8"/></linearGradient>
<linearGradient id="cg51" x1="0" y1="0" x2="1" y2="0"><stop offset="0.000" stop-color="#a4d4fd"/><stop offset="0.083" stop-color="#b2d6fd"/><stop offset="0.167" stop-color="#c0d7fe"/><stop offset="0.250" stop-color="#cfd8fe"/><stop offset="0.333" stop-color="#dcd8fe"/><stop offset="0.417" stop-color="#e9d8ff"/><stop offset="0.500" stop-color="#f6d9ff"/><stop offset="0.583" stop-color="#fad2f5"/><stop offset="0.667" stop-color="#fccae8"/><stop offset="0.750" stop-color="#ffc2db"/><stop offset="0.833" stop-color="#ffb5cf"/><stop offset="0.917" stop-color="#ffa6c3"/><stop offset="1.000" stop-color="#ff98b8"/></linearGradient>
<linearGradient id="cg52" x1="0" y1="0" x2="1" y2="0"><stop offset="0.000" stop-color="#a4d3fd"/><stop offset="0.083" stop-color="#b2d4fe"/><stop offset="0.167" stop-color="#c0d5fe"/><stop offset="0.250" stop-color="#ced6fe"/><stop offset="0.333" stop-color="#dbd6fe"/><stop offset="0.417" stop-color="#e8d7ff"/><stop offset="0.500" stop-color="#f5d7ff"/><stop offset="0.583" stop-color="#fad1f5"/><stop offset="0.667" stop-color="#fcc8e8"/><stop offset="0.750" stop-color="#ffc0db"/><stop offset="0.833" stop-color="#ffb3cf"/><stop offset="0.917" stop-color="#ffa5c3"/><stop offset="1.000" stop-color="#ff97b8"/></linearGradient>
<linearGradient id="cg53" x1="0" y1="0" x2="1" y2="0"><stop offset="0.000" stop-color="#a3d1fe"/><stop offset="0.083" stop-color="#b2d2fe"/><stop offset="0.167" stop-color="#c0d3fe"/><stop offset="0.250" stop-color="#ced4fe"/><stop offset="0.333" stop-color="#dbd4fe"/><stop offset="0.417" stop-color="#e8d5ff"/><stop offset="0.500" stop-color="#f5d5ff"/><stop offset="0.583" stop-color="#facff5"/><stop offset="0.667" stop-color="#fcc7e8"/><stop offset="0.750" stop-color="#ffbedb"/><stop offset="0.833" stop-color="#ffb1cf"/><stop offset="0.917" stop-color="#ffa3c3"/><stop offset="1.000" stop-color="#ff95b8"/></linearGradient>
<linearGradient id="cg54" x1="0" y1="0" x2="1" y2="0"><stop offset="0.000" stop-color="#a3cffe"/><stop offset="0.083" stop-color="#b1d0fe"/><stop offset="0.167" stop-color="#bfd1fe"/><stop offset="0.250" stop-color="#cdd2fe"/><stop offset="0.333" stop-color="#dbd3fe"/><stop offset="0.417" stop-color="#e8d3ff"/><stop offset="0.500" stop-color="#f5d4ff"/><stop offset="0.583" stop-color="#f9cdf5"/><stop offset="0.667" stop-color="#fcc5e7"/><stop offset="0.750" stop-color="#ffbdda"/><stop offset="0.833" stop-color="#ffb0cf"/><stop offset="0.917" stop-color="#ffa2c3"/><stop offset="1.000" stop-color="#ff93b8"/></linearGradient>
<linearGradient id="cg55" x1="0" y1="0" x2="1" y2="0"><stop offset="0.000" stop-color="#a3cdfe"/><stop offset="0.083" stop-color="#b1cefe"/><stop offset="0.167" stop-color="#bfcffe"/><stop offset="0.250" stop-color="#cdd0fe"/><stop offset="0.333" stop-color="#dad1ff"/><stop offset="0.417" stop-color="#e7d1ff"/><stop offset="0.500" stop-color="#f4d2ff"/><stop offset="0.583" stop-color="#f9cbf4"/><stop offset="0.667" stop-color="#fcc3e7"/><stop offset="0.750" stop-color="#ffbbda"/><stop offset="0.833" stop-color="#ffaecf"/><stop offset="0.917" stop-color="#ffa0c3"/><stop offset="1.000" stop-color="#ff92b8"/></linearGradient>
<linearGradient id="cg56" x1="0" y1="0" x2="1" y2="0"><stop offset="0.000" stop-color="#a3cbfe"/><stop offset="0.083" stop-color="#b1ccfe"/><stop offset="0.167" stop-color="#bfcdff"/><stop offset="0.250" stop-color="#cdcfff"/><stop offset="0.333" stop-color="#dacfff"/><stop offset="0.417" stop-color="#e7d0ff"/><stop offset="0.500" stop-color="#f4d0ff"/><stop offset="0.583" stop-color="#f9caf4"/><stop offset="0.667" stop-color="#fcc2e7"/><stop offset="0.750" stop-color="#ffb9da"/><stop offset="0.833" stop-color="#ffaccf"/><stop offset="0.917" stop-color="#ff9ec3"/><stop offset="1.000" stop-color="#ff90b8"/></linearGradient>
<linearGradient id="cg57" x1="0" y1="0" x2="1" y2="0"><stop offset="0.000" stop-color="#a2c9ff"/><stop offset="0.083" stop-color="#b0caff"/><stop offset="0.167" stop-color="#beccff"/><stop offset="0.250" stop-color="#cccdff"/><stop offset="0.333" stop-color="#d9cdff"/><stop offset="0.417" stop-color="#e7ceff"/><stop offset="0.500" stop-color="#f4ceff"/><stop offset="0.583" stop-color="#f9c8f4"/><stop offset="0.667" stop-color="#fcc0e7"/><stop offset="0.750" stop-color="#ffb8da"/><stop offset="0.833" stop-color="#ffabcf"/><stop offset="0.917" stop-color="#ff9dc3"/><stop offset="1.000" stop-color="#ff8fb8"/></linearGradient>
<linearGradient id="cg58" x1="0" y1="0" x2="1" y2="0"><stop offset="0.000" stop-color="#a2c7ff"/><stop offset="0.083" stop-color="#b0c8ff"/><stop offset="0.167" stop-color="#becaff"/><stop offset="0.250" stop-color="#cccbff"/><stop offset="0.333" stop-color="#d9ccff"/><stop offset="0.417" stop-color="#e6ccff"/><stop offset="0.500" stop-color="#f4cdff"/><stop offset="0.583" stop-color="#f9c6f4"/><stop offset="0.667" stop-color="#fcbee7"/><stop offset="0.750" stop-color="#ffb6da"/><stop offset="0.833" stop-color="#ffa9ce"/><stop offset="0.917" stop-color="#ff9bc3"/><stop offset="1.000" stop-color="#ff8db8"/></linearGradient>
<linearGradient id="barbg" x1="0" y1="0" x2="0" y2="1"><stop offset="0" stop-color="#464646"/><stop offset="1" stop-color="#1f1f1f"/></linearGradient>
<linearGradient id="btn" x1="0" y1="0" x2="0" y2="1"><stop offset="0" stop-color="#b4b4b4"/><stop offset="0.12" stop-color="#a2a2a2"/><stop offset="0.55" stop-color="#8c8c8c"/><stop offset="0.62" stop-color="#7e7e7e"/><stop offset="1" stop-color="#585858"/></linearGradient>
<linearGradient id="btnsel" x1="0" y1="0" x2="0" y2="1"><stop offset="0" stop-color="#1a1a1a"/><stop offset="1" stop-color="#2e2e2e"/></linearGradient>
<linearGradient id="tb" x1="0" y1="0" x2="0" y2="1"><stop offset="0" stop-color="#a6a6a6"/><stop offset="1" stop-color="#6c6c6c"/></linearGradient>
<linearGradient id="tb2" x1="0" y1="0" x2="0" y2="1"><stop offset="0" stop-color="#9a9a9a"/><stop offset="1" stop-color="#5e5e5e"/></linearGradient>
<linearGradient id="circ" x1="0" y1="0" x2="0" y2="1"><stop offset="0" stop-color="#6e6e6e"/><stop offset="1" stop-color="#a6a6a6"/></linearGradient>
<linearGradient id="dk" x1="0" y1="0" x2="0" y2="1"><stop offset="0" stop-color="#3c3c3c"/><stop offset="1" stop-color="#242424"/></linearGradient>
<linearGradient id="rshadow" x1="0" y1="0" x2="1" y2="0"><stop offset="0" stop-color="#000" stop-opacity="0"/><stop offset="1" stop-color="#000" stop-opacity="0.75"/></linearGradient>
</defs>
<rect x="0" y="0" width="2293" height="1392" fill="#333" />
<rect x="0" y="0" width="2293" height="31" fill="#ebf3f7" />
<rect x="0" y="0" width="2293" height="1" fill="#5e6666" />
<text transform="translate(30.80,20) scale(0.9199,1)" font-size="12.79" fill="#111" >Calman 2025 Calman Ultimate for Business 357 Days Remaining  - Untitled</text>
<g transform="translate(17,15)"><path d="M0,-8 L4,-4 L0,0 L-4,-4Z" fill="#ffc20e"/><path d="M-4,-4 L0,0 L-4,4 L-8,0Z" fill="#29b6f6"/><path d="M4,-4 L8,0 L4,4 L0,0Z" fill="#22cc22"/><path d="M0,0 L4,4 L0,8 L-4,4Z" fill="#f0306a"/></g>
<rect x="2173" y="15" width="10" height="1" fill="#111" />
<rect x="2218.5" y="10.5" width="9.5" height="9.5" rx="1.5" fill="none" stroke="#111" stroke-width="1"/>
<path d="M2264,10 L2274,20 M2274,10 L2264,20" stroke="#111" stroke-width="1.1"/>
<rect x="0" y="31" width="2293" height="66" fill="#222" />
<path d="M1,31 H184 V56 Q184,60.5 179.5,60.5 H5 Q1,60.5 1,56 Z" fill="#aaa"/>
<path d="M2,31 H183 V55.5 Q183,59.5 179,59.5 H6 Q2,59.5 2,55.5 Z" fill="url(#redg)"/>
<g transform="translate(35.4,45.2)" fill="none" stroke="#fff" stroke-width="2.3" stroke-linejoin="miter"><path d="M-4.3,-5.7 L0,-10 L4.3,-5.7"/><path d="M-5.7,-4.3 L-10,0 L-5.7,4.3"/><path d="M5.7,-4.3 L10,0 L5.7,4.3"/><path d="M-4.3,5.7 L0,10 L4.3,5.7"/></g>
<g transform="translate(35.4,45.2)"><path d="M0,-7.7 L7.7,0 L0,7.7 L-7.7,0Z" fill="#fff" stroke="#d62222" stroke-width="0.7"/><path d="M-2.57,-5.13 L5.13,2.57 M-5.13,-2.57 L2.57,5.13 M2.57,-5.13 L-5.13,2.57 M5.13,-2.57 L-2.57,5.13" stroke="#d62222" stroke-width="0.7"/></g>
<g fill="none" stroke="#fff" stroke-width="2.9"><path d="M61.0,41.8 A4.95,4.95 0 1 0 61.0,49.4"/><circle cx="69" cy="45.6" r="4.95"/><path d="M75.35,39.2 V52"/><path d="M80.55,33.1 V52"/><path d="M86,39.2 V52 M86,45.2 A4.25,4.25 0 0 1 94.5,45.2 V52 M94.5,45.2 A4.25,4.25 0 0 1 102.75,45.2 V52"/><circle cx="112.7" cy="45.6" r="4.95"/><path d="M119.05,39.2 V52"/><path d="M124.3,39.2 V52 M124.3,45.2 A5.05,5.05 0 0 1 134.45,45.2 V52"/></g>
<circle cx="166.8" cy="44.8" r="9" fill="#d41818"/>
<path d="M162,43.8 L171.5,43.8 L166.8,49 Z" fill="#fff"/>
<rect x="191" y="43.5" width="2102" height="5" fill="url(#rainbow)" />
<rect x="0" y="97" width="2293" height="668" fill="#333" />
<rect x="0" y="765" width="2293" height="180" fill="#000" />
<rect x="0" y="945" width="2293" height="380" fill="#333" />
<path d="M1,66.5 H23.5 Q27.5,66.5 27.5,70.5 V90 Q27.5,94 23.5,94 H1 Z" fill="url(#btng)" stroke="#c8c8c8" stroke-width="1"/>
<circle cx="14.1" cy="79.8" r="9.6" fill="url(#pbc)"/>
<path d="M11,74 L16.5,79.3 L11,84.5 Z" fill="#fff"/>
<path d="M30.5,97 V70.5 Q30.5,66.5 34.5,66.5 H117.5 Q121.5,66.5 121.5,70.5 V97 Z" fill="url(#tabg)"/>
<path d="M30.5,97 V70.5 Q30.5,66.5 34.5,66.5 H117.5 Q121.5,66.5 121.5,70.5 V97" fill="none" stroke="#8a8a8a" stroke-width="1"/>
<rect x="88" y="67" width="1" height="30" fill="#8a8a8a" />
<text transform="translate(35.51,86) scale(1.0118,1)" font-size="11.92" fill="#e6e6e6" >History 1</text>
<circle cx="104.2" cy="83.5" r="8.5" fill="#383838"/>
<path d="M100.8,83.5 H107.6 M104.2,80.1 V86.9" stroke="#8a8a8a" stroke-width="1"/>
<path d="M1796.3,96 V70 Q1796.3,66 1800.3,66 H1938.7 Q1942.7,66 1942.7,70 V96 Z" fill="url(#wg)"/>
<path d="M1796.3,96 V70 Q1796.3,66 1800.3,66 H1801.8 V96 Z" fill="#00d800"/>
<circle cx="1887.5" cy="81" r="9.5" fill="url(#ddc)"/>
<path d="M1882.5,80 H1892.5 L1887.5,85 Z" fill="#fff"/>
<rect x="1906.2" y="69" width="1.5" height="27" fill="#484848" />
<circle cx="1927.4" cy="81" r="12.7" fill="#0000f0" stroke="#fff" stroke-width="1"/>
<text transform="translate(1919.69,84) scale(1.0875,1)" font-size="8.58" fill="#fff" font-weight="bold" >359</text>
<text transform="translate(1804.46,77.7) scale(1.0228,1)" font-size="10.32" fill="#f0f0f0" >X-Rite i1Pro 3</text>
<text transform="translate(1803.81,91.4) scale(1.0533,1)" font-size="10.32" fill="#f0f0f0" >Rear Projector</text>
<path d="M1948.7,96 V70 Q1948.7,66 1952.7,66 H2074.5 Q2078.5,66 2078.5,70 V96 Z" fill="url(#wg)"/>
<path d="M1948.7,96 V70 Q1948.7,66 1952.7,66 H1954.2 V96 Z" fill="#00d800"/>
<circle cx="2062" cy="81" r="9.5" fill="url(#ddc)"/>
<path d="M2057,80 H2067 L2062,85 Z" fill="#fff"/>
<text transform="translate(1956.78,77.7) scale(1.0862,1)" font-size="10.32" fill="#f0f0f0" >Mobile Forge</text>
<path d="M2084.8,96 V70 Q2084.8,66 2088.8,66 H2223.6 Q2227.6,66 2227.6,70 V96 Z" fill="url(#wg)"/>
<path d="M2084.8,96 V70 Q2084.8,66 2088.8,66 H2090.3 V96 Z" fill="#f0f000"/>
<circle cx="2211.8" cy="81" r="9.5" fill="url(#ddc)"/>
<path d="M2206.8,80 H2216.8 L2211.8,85 Z" fill="#fff"/>
<text transform="translate(2093.10,77.6) scale(1.0667,1)" font-size="10.32" fill="#f0f0f0" >Direct Display Control</text>
<rect x="2231" y="66.5" width="33" height="28" rx="4" fill="url(#btng)" stroke="#c8c8c8" stroke-width="1"/>
<circle cx="2247.6" cy="80" r="10" fill="#626262" opacity="0.9"/>
<path d="M2246.98,73.23 L2248.22,73.23 L2248.94,75.10 L2249.77,75.44 L2251.60,74.63 L2252.47,75.50 L2251.66,77.33 L2252.00,78.16 L2253.87,78.88 L2253.87,80.12 L2252.00,80.84 L2251.66,81.67 L2252.47,83.50 L2251.60,84.37 L2249.77,83.56 L2248.94,83.90 L2248.22,85.77 L2246.98,85.77 L2246.26,83.90 L2245.43,83.56 L2243.60,84.37 L2242.73,83.50 L2243.54,81.67 L2243.20,80.84 L2241.33,80.12 L2241.33,78.88 L2243.20,78.16 L2243.54,77.33 L2242.73,75.50 L2243.60,74.63 L2245.43,75.44 L2246.26,75.10 Z" fill="#d8d8d8"/>
<circle cx="2247.6" cy="79.5" r="2.4" fill="#777"/>
<path d="M2293,66.5 H2270 Q2266,66.5 2266,70.5 V90 Q2266,94 2270,94 H2293 Z" fill="url(#btng)" stroke="#c8c8c8" stroke-width="1"/>
<circle cx="2280" cy="80" r="9" fill="#626262" opacity="0.9"/>
<path d="M2281.5,75 L2276.5,79.5 L2281.5,84 Z" fill="#fff"/>
<text transform="translate(33.31,232.7) scale(0.8939,1)" font-size="57.70" fill="#eeeeee" >Grayscale</text>
<text transform="translate(203.97,300.9) scale(0.9778,1)" font-size="20.35" fill="#d6d6d6" >DeltaE 2000</text>
<rect x="63" y="308" width="425" height="343" fill="#232323" />
<rect x="118" y="308" width="2" height="343" fill="#8e8e8e" />
<rect x="175" y="308" width="2" height="343" fill="#8e8e8e" />
<rect x="232" y="308" width="2" height="343" fill="#8e8e8e" />
<rect x="288" y="308" width="2" height="343" fill="#8e8e8e" />
<rect x="345" y="308" width="2" height="343" fill="#8e8e8e" />
<rect x="401" y="308" width="2" height="343" fill="#8e8e8e" />
<rect x="458" y="308" width="2" height="343" fill="#8e8e8e" />
<rect x="63" y="308" width="425.8" height="343" fill="none" stroke="#8e8e8e" stroke-width="2"/>
<rect x="54" y="307" width="8" height="2" fill="#e4e4e4" />
<rect x="54" y="338" width="8" height="2" fill="#e4e4e4" />
<rect x="54" y="369" width="8" height="2" fill="#e4e4e4" />
<rect x="54" y="401" width="8" height="2" fill="#e4e4e4" />
<rect x="54" y="432" width="8" height="2" fill="#e4e4e4" />
<rect x="54" y="463" width="8" height="2" fill="#e4e4e4" />
<rect x="54" y="494" width="8" height="2" fill="#e4e4e4" />
<rect x="54" y="525" width="8" height="2" fill="#e4e4e4" />
<rect x="54" y="556" width="8" height="2" fill="#e4e4e4" />
<rect x="54" y="588" width="8" height="2" fill="#e4e4e4" />
<rect x="54" y="619" width="8" height="2" fill="#e4e4e4" />
<rect x="54" y="650" width="8" height="2" fill="#e4e4e4" />
<rect x="62" y="652" width="2" height="7" fill="#e4e4e4" />
<text transform="translate(57.26,681) scale(1.0000,1)" font-size="19.91" fill="#d6d6d6" >0</text>
<rect x="118" y="652" width="2" height="7" fill="#e4e4e4" />
<text transform="translate(113.84,681) scale(1.0000,1)" font-size="19.91" fill="#d6d6d6" >2</text>
<rect x="175" y="652" width="2" height="7" fill="#e4e4e4" />
<text transform="translate(170.49,681) scale(1.0000,1)" font-size="19.91" fill="#d6d6d6" >4</text>
<rect x="232" y="652" width="2" height="7" fill="#e4e4e4" />
<text transform="translate(226.93,681) scale(1.0000,1)" font-size="19.91" fill="#d6d6d6" >6</text>
<rect x="288" y="652" width="2" height="7" fill="#e4e4e4" />
<text transform="translate(283.58,681) scale(1.0000,1)" font-size="19.91" fill="#d6d6d6" >8</text>
<rect x="345" y="652" width="2" height="7" fill="#e4e4e4" />
<text transform="translate(334.26,681) scale(1.0000,1)" font-size="19.91" fill="#d6d6d6" >10</text>
<rect x="401" y="652" width="2" height="7" fill="#e4e4e4" />
<text transform="translate(390.95,681) scale(1.0000,1)" font-size="19.91" fill="#d6d6d6" >12</text>
<rect x="458" y="652" width="2" height="7" fill="#e4e4e4" />
<text transform="translate(447.32,681) scale(1.0000,1)" font-size="19.91" fill="#d6d6d6" >14</text>
<text transform="translate(51.23,643.4090909090909) scale(1.0000,1)" font-size="19.48" fill="#d6d6d6" >0</text>
<rect x="64" y="621.8181818181818" width="35.64540000000001" height="23.7" fill="#000" />
<rect x="64" y="623.3181818181818" width="33.44540000000001" height="19.7" fill="url(#bar0)" />
<text transform="translate(40.40,612.2272727272727) scale(1.0000,1)" font-size="19.48" fill="#d6d6d6" >10</text>
<rect x="64" y="590.6363636363636" width="57.145799999999994" height="23.7" fill="#000" />
<rect x="64" y="592.1363636363636" width="54.94579999999999" height="19.7" fill="url(#bar10)" />
<text transform="translate(40.40,581.0454545454546) scale(1.0000,1)" font-size="19.48" fill="#d6d6d6" >20</text>
<rect x="64" y="559.4545454545455" width="66.62295000000002" height="23.7" fill="#000" />
<rect x="64" y="560.9545454545455" width="64.42295000000001" height="19.7" fill="url(#bar20)" />
<text transform="translate(40.40,549.8636363636364) scale(1.0000,1)" font-size="19.48" fill="#d6d6d6" >30</text>
<rect x="64" y="528.2727272727273" width="73.29939" height="23.7" fill="#000" />
<rect x="64" y="529.7727272727273" width="71.09939" height="19.7" fill="url(#bar30)" />
<text transform="translate(40.40,518.6818181818182) scale(1.0000,1)" font-size="19.48" fill="#d6d6d6" >40</text>
<rect x="64" y="497.0909090909091" width="92.33855999999999" height="23.7" fill="#000" />
<rect x="64" y="498.5909090909091" width="90.13855999999998" height="19.7" fill="url(#bar40)" />
<text transform="translate(40.40,487.49999999999994) scale(1.0000,1)" font-size="19.48" fill="#d6d6d6" >50</text>
<rect x="64" y="465.9090909090909" width="109.76520000000001" height="23.7" fill="#000" />
<rect x="64" y="467.4090909090909" width="107.5652" height="19.7" fill="url(#bar50)" />
<text transform="translate(40.40,456.3181818181818) scale(1.0000,1)" font-size="19.48" fill="#d6d6d6" >60</text>
<rect x="64" y="434.72727272727275" width="137.80059" height="23.7" fill="#000" />
<rect x="64" y="436.22727272727275" width="135.60059" height="19.7" fill="url(#bar60)" />
<text transform="translate(40.40,425.1363636363636) scale(1.0000,1)" font-size="19.48" fill="#d6d6d6" >70</text>
<rect x="64" y="403.54545454545456" width="138.64928999999995" height="23.7" fill="#000" />
<rect x="64" y="405.04545454545456" width="136.44928999999996" height="19.7" fill="url(#bar70)" />
<text transform="translate(40.40,393.95454545454544) scale(1.0000,1)" font-size="19.48" fill="#d6d6d6" >80</text>
<rect x="64" y="372.3636363636364" width="146.34416999999996" height="23.7" fill="#000" />
<rect x="64" y="373.8636363636364" width="144.14416999999997" height="19.7" fill="url(#bar80)" />
<text transform="translate(40.40,362.77272727272725) scale(1.0000,1)" font-size="19.48" fill="#d6d6d6" >90</text>
<rect x="64" y="341.1818181818182" width="159.58389" height="23.7" fill="#000" />
<rect x="64" y="342.6818181818182" width="157.38389" height="19.7" fill="url(#bar90)" />
<text transform="translate(29.56,331.59090909090907) scale(1.0000,1)" font-size="19.48" fill="#d6d6d6" >100</text>
<rect x="64" y="310.0" width="165.69453" height="23.7" fill="#000" />
<rect x="64" y="311.5" width="163.49453" height="19.7" fill="url(#bar100)" />
<rect x="90.09" y="308" width="2.2" height="343" fill="#008a00" />
<rect x="146.67000000000002" y="308" width="2.2" height="343" fill="#ffff00" />
<rect x="347.529" y="308" width="2.2" height="343" fill="#ff0000" />
<text transform="translate(897.14,206.7) scale(0.9472,1)" font-size="20.06" fill="#d6d6d6" >RGB Balance</text>
<rect x="585" y="214.5" width="781" height="436.70000000000005" fill="#232323" />
<rect x="576" y="214" width="8" height="2" fill="#e4e4e4" />
<text transform="translate(542.95,223.8) scale(1.0000,1)" font-size="19.91" fill="#d6d6d6" >120</text>
<rect x="585" y="269" width="781" height="2" fill="#8e8e8e" />
<rect x="576" y="269" width="8" height="2" fill="#e4e4e4" />
<text transform="translate(543.01,278) scale(1.0000,1)" font-size="19.91" fill="#d6d6d6" >115</text>
<rect x="585" y="324" width="781" height="2" fill="#8e8e8e" />
<rect x="576" y="324" width="8" height="2" fill="#e4e4e4" />
<text transform="translate(542.95,332.5) scale(1.0000,1)" font-size="19.91" fill="#d6d6d6" >110</text>
<rect x="585" y="378" width="781" height="2" fill="#8e8e8e" />
<rect x="576" y="378" width="8" height="2" fill="#e4e4e4" />
<text transform="translate(543.01,387) scale(1.0000,1)" font-size="19.91" fill="#d6d6d6" >105</text>
<rect x="585" y="434" width="781" height="2" fill="#8e8e8e" />
<rect x="576" y="434" width="8" height="2" fill="#e4e4e4" />
<text transform="translate(542.95,442.5) scale(1.0000,1)" font-size="19.91" fill="#d6d6d6" >100</text>
<rect x="585" y="488" width="781" height="2" fill="#8e8e8e" />
<rect x="576" y="488" width="8" height="2" fill="#e4e4e4" />
<text transform="translate(554.09,497) scale(1.0000,1)" font-size="19.91" fill="#d6d6d6" >95</text>
<rect x="585" y="542" width="781" height="2" fill="#8e8e8e" />
<rect x="576" y="542" width="8" height="2" fill="#e4e4e4" />
<text transform="translate(554.03,551) scale(1.0000,1)" font-size="19.91" fill="#d6d6d6" >90</text>
<rect x="585" y="596" width="781" height="2" fill="#8e8e8e" />
<rect x="576" y="596" width="8" height="2" fill="#e4e4e4" />
<text transform="translate(554.09,604.8) scale(1.0000,1)" font-size="19.91" fill="#d6d6d6" >85</text>
<rect x="576" y="650" width="8" height="2" fill="#e4e4e4" />
<text transform="translate(554.03,660.8) scale(1.0000,1)" font-size="19.91" fill="#d6d6d6" >80</text>
<rect x="585" y="214.5" width="781" height="436.70000000000005" fill="none" stroke="#8e8e8e" stroke-width="2.2"/>
<rect x="584" y="652" width="2" height="7" fill="#e4e4e4" />
<text transform="translate(579.68,680.9) scale(1.0000,1)" font-size="20.20" fill="#d6d6d6" >0</text>
<rect x="662" y="652" width="2" height="7" fill="#e4e4e4" />
<text transform="translate(651.81,680.9) scale(1.0000,1)" font-size="20.20" fill="#d6d6d6" >10</text>
<rect x="740" y="652" width="2" height="7" fill="#e4e4e4" />
<text transform="translate(730.19,680.9) scale(1.0000,1)" font-size="20.20" fill="#d6d6d6" >20</text>
<rect x="818" y="652" width="2" height="7" fill="#e4e4e4" />
<text transform="translate(808.43,680.9) scale(1.0000,1)" font-size="20.20" fill="#d6d6d6" >30</text>
<rect x="896" y="652" width="2" height="7" fill="#e4e4e4" />
<text transform="translate(886.71,680.9) scale(1.0000,1)" font-size="20.20" fill="#d6d6d6" >40</text>
<rect x="974" y="652" width="2" height="7" fill="#e4e4e4" />
<text transform="translate(964.65,680.9) scale(1.0000,1)" font-size="20.20" fill="#d6d6d6" >50</text>
<rect x="1053" y="652" width="2" height="7" fill="#e4e4e4" />
<text transform="translate(1042.67,680.9) scale(1.0000,1)" font-size="20.20" fill="#d6d6d6" >60</text>
<rect x="1131" y="652" width="2" height="7" fill="#e4e4e4" />
<text transform="translate(1120.78,680.9) scale(1.0000,1)" font-size="20.20" fill="#d6d6d6" >70</text>
<rect x="1209" y="652" width="2" height="7" fill="#e4e4e4" />
<text transform="translate(1198.98,680.9) scale(1.0000,1)" font-size="20.20" fill="#d6d6d6" >80</text>
<rect x="1287" y="652" width="2" height="7" fill="#e4e4e4" />
<text transform="translate(1277.06,680.9) scale(1.0000,1)" font-size="20.20" fill="#d6d6d6" >90</text>
<rect x="1365" y="652" width="2" height="7" fill="#e4e4e4" />
<text transform="translate(1349.27,680.9) scale(1.0000,1)" font-size="20.20" fill="#d6d6d6" >100</text>
<polyline points="584.8,419.5 662.9,468.6 741.0,467.2 819.2,458.8 897.3,463.7 975.4,462.3 1053.5,464.9 1131.6,470.3 1209.8,470.6 1287.9,471.5 1366.0,472.4" fill="none" stroke="#ff0000" stroke-width="4" stroke-linejoin="round"/>
<polyline points="584.8,422.7 662.9,464.2 741.0,454.1 819.2,438.0 897.3,438.7 975.4,430.5 1053.5,422.7 1131.6,427.0 1209.8,424.4 1287.9,422.3 1366.0,421.8" fill="none" stroke="#008000" stroke-width="3.6" stroke-linejoin="round"/>
<polyline points="584.8,416.6 662.9,460.2 741.0,451.5 819.2,439.8 897.3,436.6 975.4,433.1 1053.5,426.2 1131.6,429.7 1209.8,425.8 1287.9,423.0 1366.0,420.0" fill="none" stroke="#0000ff" stroke-width="4" stroke-linejoin="round"/>
<text transform="translate(1758.09,206.5) scale(1.0432,1)" font-size="19.33" fill="#d6d6d6" >Gamma Log/Log</text>
<rect x="1457" y="214.2" width="788" height="437.00000000000006" fill="#232323" />
<rect x="1457" y="264" width="788" height="2" fill="#8e8e8e" />
<rect x="1448" y="264" width="8" height="2" fill="#e4e4e4" />
<text transform="translate(1420.70,271.8) scale(1.0000,1)" font-size="19.62" fill="#d6d6d6" >2,4</text>
<rect x="1457" y="318" width="788" height="2" fill="#8e8e8e" />
<rect x="1448" y="318" width="8" height="2" fill="#e4e4e4" />
<text transform="translate(1421.11,325.8) scale(1.0000,1)" font-size="19.62" fill="#d6d6d6" >2,2</text>
<rect x="1457" y="372" width="788" height="2" fill="#8e8e8e" />
<rect x="1448" y="372" width="8" height="2" fill="#e4e4e4" />
<text transform="translate(1437.47,379.8) scale(1.0000,1)" font-size="19.62" fill="#d6d6d6" >2</text>
<rect x="1457" y="426" width="788" height="2" fill="#8e8e8e" />
<rect x="1448" y="426" width="8" height="2" fill="#e4e4e4" />
<text transform="translate(1420.98,434.0) scale(1.0000,1)" font-size="19.62" fill="#d6d6d6" >1,8</text>
<rect x="1457" y="481" width="788" height="2" fill="#8e8e8e" />
<rect x="1448" y="481" width="8" height="2" fill="#e4e4e4" />
<text transform="translate(1420.98,488.8) scale(1.0000,1)" font-size="19.62" fill="#d6d6d6" >1,6</text>
<rect x="1457" y="537" width="788" height="2" fill="#8e8e8e" />
<rect x="1448" y="537" width="8" height="2" fill="#e4e4e4" />
<text transform="translate(1420.70,544.8) scale(1.0000,1)" font-size="19.62" fill="#d6d6d6" >1,4</text>
<rect x="1457" y="591" width="788" height="2" fill="#8e8e8e" />
<rect x="1448" y="591" width="8" height="2" fill="#e4e4e4" />
<text transform="translate(1421.11,598.8) scale(1.0000,1)" font-size="19.62" fill="#d6d6d6" >1,2</text>
<rect x="1457" y="645" width="788" height="2" fill="#8e8e8e" />
<rect x="1448" y="645" width="8" height="2" fill="#e4e4e4" />
<text transform="translate(1437.45,652.8) scale(1.0000,1)" font-size="19.62" fill="#d6d6d6" >1</text>
<rect x="1457" y="214.2" width="788" height="437.00000000000006" fill="none" stroke="#8e8e8e" stroke-width="2.2"/>
<rect x="1456" y="652" width="2" height="7" fill="#e4e4e4" />
<text transform="translate(1451.84,680.5) scale(1.0000,1)" font-size="19.62" fill="#d6d6d6" >0</text>
<rect x="1535" y="652" width="2" height="7" fill="#e4e4e4" />
<text transform="translate(1524.79,680.5) scale(1.0000,1)" font-size="19.62" fill="#d6d6d6" >10</text>
<rect x="1613" y="652" width="2" height="7" fill="#e4e4e4" />
<text transform="translate(1603.82,680.5) scale(1.0000,1)" font-size="19.62" fill="#d6d6d6" >20</text>
<rect x="1692" y="652" width="2" height="7" fill="#e4e4e4" />
<text transform="translate(1682.71,680.5) scale(1.0000,1)" font-size="19.62" fill="#d6d6d6" >30</text>
<rect x="1771" y="652" width="2" height="7" fill="#e4e4e4" />
<text transform="translate(1761.63,680.5) scale(1.0000,1)" font-size="19.62" fill="#d6d6d6" >40</text>
<rect x="1850" y="652" width="2" height="7" fill="#e4e4e4" />
<text transform="translate(1840.23,680.5) scale(1.0000,1)" font-size="19.62" fill="#d6d6d6" >50</text>
<rect x="1928" y="652" width="2" height="7" fill="#e4e4e4" />
<text transform="translate(1918.89,680.5) scale(1.0000,1)" font-size="19.62" fill="#d6d6d6" >60</text>
<rect x="2007" y="652" width="2" height="7" fill="#e4e4e4" />
<text transform="translate(1997.66,680.5) scale(1.0000,1)" font-size="19.62" fill="#d6d6d6" >70</text>
<rect x="2086" y="652" width="2" height="7" fill="#e4e4e4" />
<text transform="translate(2076.50,680.5) scale(1.0000,1)" font-size="19.62" fill="#d6d6d6" >80</text>
<rect x="2165" y="652" width="2" height="7" fill="#e4e4e4" />
<text transform="translate(2155.24,680.5) scale(1.0000,1)" font-size="19.62" fill="#d6d6d6" >90</text>
<rect x="2244" y="652" width="2" height="7" fill="#e4e4e4" />
<text transform="translate(2228.27,680.5) scale(1.0000,1)" font-size="19.62" fill="#d6d6d6" >100</text>
<polyline points="1455.5,565.5 1459.5,526.0 1463.9,484.9 1472.1,461.2 1481.6,439.0 1492.7,414.5 1494.0,413.1 1495.8,411.1 1497.9,408.8 1500.1,406.2 1502.4,403.6 1504.5,401.1 1506.4,398.6 1508.3,395.9 1510.2,393.2 1512.1,390.4 1514.2,387.8 1516.4,385.3 1518.8,383.0 1521.3,380.8 1524.0,378.6 1526.7,376.6 1529.4,374.6 1532.2,372.6 1535.0,370.6 1537.9,368.7 1540.8,366.9 1543.8,365.0 1546.7,363.3 1549.6,361.6 1552.3,360.0 1554.9,358.5 1557.5,357.1 1560.2,355.7 1563.2,354.2 1566.7,352.7 1570.8,351.0 1575.4,349.2 1580.2,347.4 1585.2,345.5 1590.2,343.8 1594.9,342.3 1599.3,341.0 1603.7,339.8 1608.0,338.7 1612.2,337.6 1616.6,336.6 1621.0,335.6 1625.4,334.6 1629.7,333.7 1634.0,332.8 1638.6,331.9 1643.6,330.9 1649.2,329.8 1655.2,328.6 1661.3,327.3 1667.8,325.9 1675.1,324.6 1683.3,323.2 1692.8,321.9 1703.9,320.6 1716.6,319.4 1730.2,318.1 1744.2,316.9 1758.3,315.7 1771.9,314.6 1785.0,313.5 1798.2,312.5 1811.3,311.5 1824.4,310.6 1837.5,309.7 1850.6,308.8 1863.7,307.9 1876.9,307.1 1890.0,306.2 1903.1,305.4 1916.3,304.7 1929.4,304.0 1942.5,303.4 1955.7,302.8 1968.8,302.3 1981.9,301.8 1995.1,301.4 2008.2,300.9 2021.3,300.4 2034.4,299.9 2047.6,299.4 2060.7,299.0 2073.8,298.6 2086.9,298.2 2100.0,297.9 2113.2,297.6 2126.3,297.4 2139.4,297.2 2152.6,297.0 2165.7,296.8 2179.7,296.6 2194.9,296.5 2210.0,296.3 2224.1,296.2 2235.9,296.1 2244.5,296.0" fill="none" stroke="#ffff00" stroke-width="4" stroke-linejoin="round"/>
<polyline points="1456.8,566.8 1535.6,320.1 1614.3,306.0 1693.1,308.0 1771.9,298.2 1850.7,300.1 1929.4,302.9 2008.2,287.3 2087.0,287.1 2165.7,288.0 2244.5,295.1" fill="none" stroke="#8c8c8c" stroke-width="4" stroke-linejoin="round"/>
<text transform="translate(119.72,737.6) scale(0.9667,1)" font-size="41.57" fill="#eeeeee" >Avg dE2000: 4,1</text>
<text transform="translate(684.43,738) scale(0.9074,1)" font-size="42.15" fill="#eeeeee" >Avg CCT: 6980</text>
<text transform="translate(1209.49,737.8) scale(0.9953,1)" font-size="41.72" fill="#eeeeee" >Contrast Ratio: 916</text>
<text transform="translate(1788.18,737.8) scale(0.9814,1)" font-size="41.86" fill="#eeeeee" >Total Gamma: 2,26</text>
<rect x="338" y="765" width="1" height="180" fill="#141414" />
<rect x="2094" y="765" width="1" height="180" fill="#141414" />
<rect x="367.2" y="773" width="134.6" height="141" fill="#f2f2f2" />
<rect x="369.2" y="775" width="130.6" height="137" fill="#000000" />
<rect x="369.2" y="775" width="130.6" height="68" fill="#060708" />
<text transform="translate(429.81,933) scale(1.0000,1)" font-size="16.86" fill="#ffffff" >0</text>
<rect x="525.1" y="773" width="134.6" height="141" fill="#f2f2f2" />
<rect x="527.1" y="775" width="130.6" height="137" fill="#1a1a1a" />
<rect x="527.1" y="775" width="130.6" height="68" fill="#131517" />
<text transform="translate(582.71,933) scale(1.0000,1)" font-size="16.86" fill="#ffffff" >10</text>
<rect x="683.0" y="773" width="134.6" height="141" fill="#f2f2f2" />
<rect x="685.0" y="775" width="130.6" height="137" fill="#333333" />
<rect x="685.0" y="775" width="130.6" height="68" fill="#2c2f2f" />
<text transform="translate(740.83,933) scale(1.0000,1)" font-size="16.86" fill="#ffffff" >20</text>
<rect x="840.9000000000001" y="773" width="134.6" height="141" fill="#f2f2f2" />
<rect x="842.9000000000001" y="775" width="130.6" height="137" fill="#4d4d4d" />
<rect x="842.9000000000001" y="775" width="130.6" height="68" fill="#474c4d" />
<text transform="translate(898.83,933) scale(1.0000,1)" font-size="16.86" fill="#ffffff" >30</text>
<rect x="998.8" y="773" width="134.6" height="141" fill="#f2f2f2" />
<rect x="1000.8" y="775" width="130.6" height="137" fill="#666666" />
<rect x="1000.8" y="775" width="130.6" height="68" fill="#5c6363" />
<text transform="translate(1056.86,933) scale(1.0000,1)" font-size="16.86" fill="#ffffff" >40</text>
<rect x="1156.7" y="773" width="134.6" height="141" fill="#f2f2f2" />
<rect x="1158.7" y="775" width="130.6" height="137" fill="#808080" />
<rect x="1158.7" y="775" width="130.6" height="68" fill="#7a7f7e" />
<text transform="translate(1214.61,933) scale(1.0000,1)" font-size="16.86" fill="#ffffff" >50</text>
<rect x="1314.6000000000001" y="773" width="134.6" height="141" fill="#f2f2f2" />
<rect x="1316.6000000000001" y="775" width="130.6" height="137" fill="#999999" />
<rect x="1316.6000000000001" y="775" width="130.6" height="68" fill="#929a98" />
<text transform="translate(1372.42,933) scale(1.0000,1)" font-size="16.86" fill="#ffffff" >60</text>
<rect x="1472.5" y="773" width="134.6" height="141" fill="#f2f2f2" />
<rect x="1474.5" y="775" width="130.6" height="137" fill="#b3b3b3" />
<rect x="1474.5" y="775" width="130.6" height="68" fill="#aab2b2" />
<text transform="translate(1530.32,933) scale(1.0000,1)" font-size="16.86" fill="#ffffff" >70</text>
<rect x="1630.4" y="773" width="134.6" height="141" fill="#f2f2f2" />
<rect x="1632.4" y="775" width="130.6" height="137" fill="#cccccc" />
<rect x="1632.4" y="775" width="130.6" height="68" fill="#c2cdcc" />
<text transform="translate(1688.29,933) scale(1.0000,1)" font-size="16.86" fill="#ffffff" >80</text>
<rect x="1788.3000000000002" y="773" width="134.6" height="141" fill="#f2f2f2" />
<rect x="1790.3000000000002" y="775" width="130.6" height="137" fill="#e6e6e6" />
<rect x="1790.3000000000002" y="775" width="130.6" height="68" fill="#dfe9e9" />
<text transform="translate(1846.16,933) scale(1.0000,1)" font-size="16.86" fill="#ffffff" >90</text>
<rect x="1946.2" y="773" width="134.6" height="141" fill="#f2f2f2" />
<rect x="1948.2" y="775" width="130.6" height="137" fill="#ffffff" />
<rect x="1948.2" y="775" width="130.6" height="68" fill="#f3ffff" />
<text transform="translate(1999.12,933) scale(1.0000,1)" font-size="16.86" fill="#ffffff" >100</text>
<g transform="translate(357.1,827.7) rotate(-90)">
<text transform="translate(-0.03,0) scale(0.9585,1)" font-size="18.17" fill="#ffffff" >Actual</text>
</g>
<g transform="translate(357.1,905.9) rotate(-90)">
<text transform="translate(-0.37,0) scale(0.9082,1)" font-size="18.17" fill="#ffffff" >Target</text>
</g>
<text transform="translate(20.20,1018) scale(1.0317,1)" font-size="40.12" fill="#eeeeee" >Current Reading</text>
<text transform="translate(20.91,1075.3) scale(1.0531,1)" font-size="32.70" fill="#eeeeee" >x: 0,3043</text>
<text transform="translate(21.42,1131.6) scale(1.0540,1)" font-size="32.70" fill="#eeeeee" >y: 0,3287</text>
<text transform="translate(21.82,1188.9) scale(0.9996,1)" font-size="34.16" fill="#eeeeee" >fL: 170,64</text>
<text transform="translate(20.78,1243.2) scale(1.0900,1)" font-size="32.85" fill="#eeeeee" >cd/m²: 584,65</text>
<rect x="450" y="975" width="402" height="294" fill="#1c1c1c" />
<rect x="460" y="984.2" width="382.7" height="279.4" fill="#2e2e2e" />
<rect x="511.7" y="989" width="326.00000000000006" height="4" fill="url(#cg0)" shape-rendering="crispEdges"/>
<rect x="511.7" y="993" width="326.00000000000006" height="4" fill="url(#cg1)" shape-rendering="crispEdges"/>
<rect x="511.7" y="997" width="326.00000000000006" height="4" fill="url(#cg2)" shape-rendering="crispEdges"/>
<rect x="511.7" y="1001" width="326.00000000000006" height="4" fill="url(#cg3)" shape-rendering="crispEdges"/>
<rect x="511.7" y="1005" width="326.00000000000006" height="4" fill="url(#cg4)" shape-rendering="crispEdges"/>
<rect x="511.7" y="1009" width="326.00000000000006" height="4" fill="url(#cg5)" shape-rendering="crispEdges"/>
<rect x="511.7" y="1013" width="326.00000000000006" height="4" fill="url(#cg6)" shape-rendering="crispEdges"/>
<rect x="511.7" y="1017" width="326.00000000000006" height="4" fill="url(#cg7)" shape-rendering="crispEdges"/>
<rect x="511.7" y="1021" width="326.00000000000006" height="4" fill="url(#cg8)" shape-rendering="crispEdges"/>
<rect x="511.7" y="1025" width="326.00000000000006" height="4" fill="url(#cg9)" shape-rendering="crispEdges"/>
<rect x="511.7" y="1029" width="326.00000000000006" height="4" fill="url(#cg10)" shape-rendering="crispEdges"/>
<rect x="511.7" y="1033" width="326.00000000000006" height="4" fill="url(#cg11)" shape-rendering="crispEdges"/>
<rect x="511.7" y="1037" width="326.00000000000006" height="4" fill="url(#cg12)" shape-rendering="crispEdges"/>
<rect x="511.7" y="1041" width="326.00000000000006" height="4" fill="url(#cg13)" shape-rendering="crispEdges"/>
<rect x="511.7" y="1045" width="326.00000000000006" height="4" fill="url(#cg14)" shape-rendering="crispEdges"/>
<rect x="511.7" y="1049" width="326.00000000000006" height="4" fill="url(#cg15)" shape-rendering="crispEdges"/>
<rect x="511.7" y="1053" width="326.00000000000006" height="4" fill="url(#cg16)" shape-rendering="crispEdges"/>
<rect x="511.7" y="1057" width="326.00000000000006" height="4" fill="url(#cg17)" shape-rendering="crispEdges"/>
<rect x="511.7" y="1061" width="326.00000000000006" height="4" fill="url(#cg18)" shape-rendering="crispEdges"/>
<rect x="511.7" y="1065" width="326.00000000000006" height="4" fill="url(#cg19)" shape-rendering="crispEdges"/>
<rect x="511.7" y="1069" width="326.00000000000006" height="4" fill="url(#cg20)" shape-rendering="crispEdges"/>
<rect x="511.7" y="1073" width="326.00000000000006" height="4" fill="url(#cg21)" shape-rendering="crispEdges"/>
<rect x="511.7" y="1077" width="326.00000000000006" height="4" fill="url(#cg22)" shape-rendering="crispEdges"/>
<rect x="511.7" y="1081" width="326.00000000000006" height="4" fill="url(#cg23)" shape-rendering="crispEdges"/>
<rect x="511.7" y="1085" width="326.00000000000006" height="4" fill="url(#cg24)" shape-rendering="crispEdges"/>
<rect x="511.7" y="1089" width="326.00000000000006" height="4" fill="url(#cg25)" shape-rendering="crispEdges"/>
<rect x="511.7" y="1093" width="326.00000000000006" height="4" fill="url(#cg26)" shape-rendering="crispEdges"/>
<rect x="511.7" y="1097" width="326.00000000000006" height="4" fill="url(#cg27)" shape-rendering="crispEdges"/>
<rect x="511.7" y="1101" width="326.00000000000006" height="4" fill="url(#cg28)" shape-rendering="crispEdges"/>
<rect x="511.7" y="1105" width="326.00000000000006" height="4" fill="url(#cg29)" shape-rendering="crispEdges"/>
<rect x="511.7" y="1109" width="326.00000000000006" height="4" fill="url(#cg30)" shape-rendering="crispEdges"/>
<rect x="511.7" y="1113" width="326.00000000000006" height="4" fill="url(#cg31)" shape-rendering="crispEdges"/>
<rect x="511.7" y="1117" width="326.00000000000006" height="4" fill="url(#cg32)" shape-rendering="crispEdges"/>
<rect x="511.7" y="1121" width="326.00000000000006" height="4" fill="url(#cg33)" shape-rendering="crispEdges"/>
<rect x="511.7" y="1125" width="326.00000000000006" height="4" fill="url(#cg34)" shape-rendering="crispEdges"/>
<rect x="511.7" y="1129" width="326.00000000000006" height="4" fill="url(#cg35)" shape-rendering="crispEdges"/>
<rect x="511.7" y="1133" width="326.00000000000006" height="4" fill="url(#cg36)" shape-rendering="crispEdges"/>
<rect x="511.7" y="1137" width="326.00000000000006" height="4" fill="url(#cg37)" shape-rendering="crispEdges"/>
<rect x="511.7" y="1141" width="326.00000000000006" height="4" fill="url(#cg38)" shape-rendering="crispEdges"/>
<rect x="511.7" y="1145" width="326.00000000000006" height="4" fill="url(#cg39)" shape-rendering="crispEdges"/>
<rect x="511.7" y="1149" width="326.00000000000006" height="4" fill="url(#cg40)" shape-rendering="crispEdges"/>
<rect x="511.7" y="1153" width="326.00000000000006" height="4" fill="url(#cg41)" shape-rendering="crispEdges"/>
<rect x="511.7" y="1157" width="326.00000000000006" height="4" fill="url(#cg42)" shape-rendering="crispEdges"/>
<rect x="511.7" y="1161" width="326.00000000000006" height="4" fill="url(#cg43)" shape-rendering="crispEdges"/>
<rect x="511.7" y="1165" width="326.00000000000006" height="4" fill="url(#cg44)" shape-rendering="crispEdges"/>
<rect x="511.7" y="1169" width="326.00000000000006" height="4" fill="url(#cg45)" shape-rendering="crispEdges"/>
<rect x="511.7" y="1173" width="326.00000000000006" height="4" fill="url(#cg46)" shape-rendering="crispEdges"/>
<rect x="511.7" y="1177" width="326.00000000000006" height="4" fill="url(#cg47)" shape-rendering="crispEdges"/>
<rect x="511.7" y="1181" width="326.00000000000006" height="4" fill="url(#cg48)" shape-rendering="crispEdges"/>
<rect x="511.7" y="1185" width="326.00000000000006" height="4" fill="url(#cg49)" shape-rendering="crispEdges"/>
<rect x="511.7" y="1189" width="326.00000000000006" height="4" fill="url(#cg50)" shape-rendering="crispEdges"/>
<rect x="511.7" y="1193" width="326.00000000000006" height="4" fill="url(#cg51)" shape-rendering="crispEdges"/>
<rect x="511.7" y="1197" width="326.00000000000006" height="4" fill="url(#cg52)" shape-rendering="crispEdges"/>
<rect x="511.7" y="1201" width="326.00000000000006" height="4" fill="url(#cg53)" shape-rendering="crispEdges"/>
<rect x="511.7" y="1205" width="326.00000000000006" height="4" fill="url(#cg54)" shape-rendering="crispEdges"/>
<rect x="511.7" y="1209" width="326.00000000000006" height="4" fill="url(#cg55)" shape-rendering="crispEdges"/>
<rect x="511.7" y="1213" width="326.00000000000006" height="4" fill="url(#cg56)" shape-rendering="crispEdges"/>
<rect x="511.7" y="1217" width="326.00000000000006" height="4" fill="url(#cg57)" shape-rendering="crispEdges"/>
<rect x="511.7" y="1221" width="326.00000000000006" height="4" fill="url(#cg58)" shape-rendering="crispEdges"/>
<rect x="510.7" y="988" width="328.00000000000006" height="238" fill="none" stroke="#9a9a9a" stroke-width="2"/>
<path d="M553.5,1225 Q690,1125 837.7,1028" fill="none" stroke="#000" stroke-width="3.2"/>
<rect x="503" y="1006.0" width="7" height="1.6" fill="#e0e0e0" />
<text transform="translate(462.82,1014.9) scale(1.0502,1)" font-size="19.04" fill="#d8d8d8" >0,35</text>
<rect x="503" y="1054.7" width="7" height="1.6" fill="#e0e0e0" />
<text transform="translate(462.82,1063.6) scale(1.0431,1)" font-size="19.04" fill="#d8d8d8" >0,34</text>
<rect x="503" y="1101.8" width="7" height="1.6" fill="#e0e0e0" />
<text transform="translate(462.82,1110.6999999999998) scale(1.0514,1)" font-size="19.04" fill="#d8d8d8" >0,33</text>
<rect x="503" y="1147.8" width="7" height="1.6" fill="#e0e0e0" />
<text transform="translate(462.82,1156.6999999999998) scale(1.0549,1)" font-size="19.04" fill="#d8d8d8" >0,32</text>
<rect x="503" y="1194.9" width="7" height="1.6" fill="#e0e0e0" />
<text transform="translate(462.82,1203.8) scale(1.0541,1)" font-size="19.04" fill="#d8d8d8" >0,31</text>
<rect x="524.2" y="1226.5" width="1.6" height="6" fill="#e0e0e0" />
<text transform="translate(506.69,1253.7) scale(1.0000,1)" font-size="18.90" fill="#d8d8d8" >0,29</text>
<rect x="588.8000000000001" y="1226.5" width="1.6" height="6" fill="#e0e0e0" />
<text transform="translate(576.51,1253.7) scale(1.0000,1)" font-size="18.90" fill="#d8d8d8" >0,3</text>
<rect x="654.5" y="1226.5" width="1.6" height="6" fill="#e0e0e0" />
<text transform="translate(637.00,1253.7) scale(1.0000,1)" font-size="18.90" fill="#d8d8d8" >0,31</text>
<rect x="720.3000000000001" y="1226.5" width="1.6" height="6" fill="#e0e0e0" />
<text transform="translate(702.82,1253.7) scale(1.0000,1)" font-size="18.90" fill="#d8d8d8" >0,32</text>
<rect x="785.4000000000001" y="1226.5" width="1.6" height="6" fill="#e0e0e0" />
<text transform="translate(767.86,1253.7) scale(1.0000,1)" font-size="18.90" fill="#d8d8d8" >0,33</text>
<rect x="665.8" y="1097.6" width="16.6" height="17.1" fill="none" stroke="#000" stroke-width="2"/>
<circle cx="618.5" cy="1138.7" r="6" fill="#1a1a1a" stroke="#111" stroke-width="1"/>
<circle cx="617" cy="1102" r="5.8" fill="#777" stroke="#222" stroke-width="1"/>
<circle cx="622" cy="1104" r="5.8" fill="#aaa" stroke="#222" stroke-width="1"/>
<circle cx="626" cy="1105.5" r="5.8" fill="#444" stroke="#222" stroke-width="1"/>
<circle cx="620" cy="1110.5" r="5.8" fill="#333" stroke="#222" stroke-width="1"/>
<circle cx="621" cy="1106" r="5.8" fill="#ccc" stroke="#222" stroke-width="1"/>
<circle cx="618.5" cy="1107.5" r="5.8" fill="#fff" stroke="#222" stroke-width="1"/>
<rect x="862" y="956" width="1320" height="2" fill="#000" />
<rect x="862" y="956" width="2" height="288" fill="#000" />
<rect x="2180" y="956" width="2" height="288" fill="#000" />
<rect x="864" y="958" width="1316" height="19" fill="#2e2e2e" />
<rect x="864" y="977" width="1316" height="19.1" fill="#121212" />
<rect x="864" y="996.1" width="1316" height="35.67" fill="#434343" />
<rect x="864" y="1031.47" width="1316" height="35.66999999999989" fill="#808080" />
<rect x="864" y="1066.84" width="1316" height="35.670000000000115" fill="#434343" />
<rect x="864" y="1102.21" width="1316" height="35.66999999999989" fill="#808080" />
<rect x="864" y="1137.58" width="1316" height="35.670000000000115" fill="#434343" />
<rect x="864" y="1172.95" width="1316" height="35.66999999999989" fill="#808080" />
<rect x="864" y="1208.32" width="1316" height="35.670000000000115" fill="#434343" />
<text transform="translate(880.36,1022.0) scale(0.9223,1)" font-size="22.67" fill="#f2f2f2" font-weight="bold" >x: CIE31</text>
<text transform="translate(1077.58,1022.0) scale(0.9300,1)" font-size="22.67" fill="#f0f0f0" >0,297</text>
<text transform="translate(1178.28,1022.0) scale(0.9300,1)" font-size="22.67" fill="#f0f0f0" >0,304</text>
<text transform="translate(1278.98,1022.0) scale(0.9300,1)" font-size="22.67" fill="#f0f0f0" >0,304</text>
<text transform="translate(1379.68,1022.0) scale(0.9300,1)" font-size="22.67" fill="#f0f0f0" >0,305</text>
<text transform="translate(1480.38,1022.0) scale(0.9300,1)" font-size="22.67" fill="#f0f0f0" >0,304</text>
<text transform="translate(1581.08,1022.0) scale(0.9300,1)" font-size="22.67" fill="#f0f0f0" >0,305</text>
<text transform="translate(1681.78,1022.0) scale(0.9300,1)" font-size="22.67" fill="#f0f0f0" >0,304</text>
<text transform="translate(1782.48,1022.0) scale(0.9300,1)" font-size="22.67" fill="#f0f0f0" >0,304</text>
<text transform="translate(1883.18,1022.0) scale(0.9300,1)" font-size="22.67" fill="#f0f0f0" >0,304</text>
<text transform="translate(1983.88,1022.0) scale(0.9300,1)" font-size="22.67" fill="#f0f0f0" >0,304</text>
<text transform="translate(2084.58,1022.0) scale(0.9300,1)" font-size="22.67" fill="#f0f0f0" >0,304</text>
<text transform="translate(880.34,1057.3700000000001) scale(0.9225,1)" font-size="22.67" fill="#f2f2f2" font-weight="bold" >y: CIE31</text>
<text transform="translate(1077.58,1057.3700000000001) scale(0.9300,1)" font-size="22.67" fill="#f0f0f0" >0,275</text>
<text transform="translate(1178.28,1057.3700000000001) scale(0.9300,1)" font-size="22.67" fill="#f0f0f0" >0,322</text>
<text transform="translate(1278.98,1057.3700000000001) scale(0.9300,1)" font-size="22.67" fill="#f0f0f0" >0,328</text>
<text transform="translate(1379.68,1057.3700000000001) scale(0.9300,1)" font-size="22.67" fill="#f0f0f0" >0,329</text>
<text transform="translate(1480.38,1057.3700000000001) scale(0.9300,1)" font-size="22.67" fill="#f0f0f0" >0,328</text>
<text transform="translate(1581.08,1057.3700000000001) scale(0.9300,1)" font-size="22.67" fill="#f0f0f0" >0,330</text>
<text transform="translate(1681.78,1057.3700000000001) scale(0.9300,1)" font-size="22.67" fill="#f0f0f0" >0,330</text>
<text transform="translate(1782.48,1057.3700000000001) scale(0.9300,1)" font-size="22.67" fill="#f0f0f0" >0,329</text>
<text transform="translate(1883.18,1057.3700000000001) scale(0.9300,1)" font-size="22.67" fill="#f0f0f0" >0,329</text>
<text transform="translate(1983.88,1057.3700000000001) scale(0.9300,1)" font-size="22.67" fill="#f0f0f0" >0,329</text>
<text transform="translate(2084.58,1057.3700000000001) scale(0.9300,1)" font-size="22.67" fill="#f0f0f0" >0,329</text>
<text transform="translate(880.13,1092.74) scale(0.9603,1)" font-size="22.67" fill="#f2f2f2" font-weight="bold" >Y</text>
<text transform="translate(1077.58,1092.74) scale(0.9300,1)" font-size="22.67" fill="#f0f0f0" >0,638</text>
<text transform="translate(1178.62,1092.74) scale(0.9300,1)" font-size="22.67" fill="#f0f0f0" >4,011</text>
<text transform="translate(1278.19,1092.74) scale(0.9300,1)" font-size="22.67" fill="#f0f0f0" >16,098</text>
<text transform="translate(1379.70,1092.74) scale(0.9300,1)" font-size="22.67" fill="#f0f0f0" >39,524</text>
<text transform="translate(1480.12,1092.74) scale(0.9300,1)" font-size="22.67" fill="#f0f0f0" >73,637</text>
<text transform="translate(1580.29,1092.74) scale(0.9300,1)" font-size="22.67" fill="#f0f0f0" >123,307</text>
<text transform="translate(1680.99,1092.74) scale(0.9300,1)" font-size="22.67" fill="#f0f0f0" >185,599</text>
<text transform="translate(1782.24,1092.74) scale(0.9300,1)" font-size="22.67" fill="#f0f0f0" >255,320</text>
<text transform="translate(1883.20,1092.74) scale(0.9300,1)" font-size="22.67" fill="#f0f0f0" >349,684</text>
<text transform="translate(1984.22,1092.74) scale(0.9300,1)" font-size="22.67" fill="#f0f0f0" >461,009</text>
<text transform="translate(2084.56,1092.74) scale(0.9300,1)" font-size="22.67" fill="#f0f0f0" >584,649</text>
<text transform="translate(880.26,1128.1100000000001) scale(0.9589,1)" font-size="22.67" fill="#f2f2f2" font-weight="bold" >Target Y</text>
<text transform="translate(1077.58,1128.1100000000001) scale(0.9300,1)" font-size="22.67" fill="#f0f0f0" >0,000</text>
<text transform="translate(1178.03,1128.1100000000001) scale(0.9300,1)" font-size="22.67" fill="#f0f0f0" >6,039</text>
<text transform="translate(1278.19,1128.1100000000001) scale(0.9300,1)" font-size="22.67" fill="#f0f0f0" >19,355</text>
<text transform="translate(1380.02,1128.1100000000001) scale(0.9300,1)" font-size="22.67" fill="#f0f0f0" >42,254</text>
<text transform="translate(1480.12,1128.1100000000001) scale(0.9300,1)" font-size="22.67" fill="#f0f0f0" >77,681</text>
<text transform="translate(1580.29,1128.1100000000001) scale(0.9300,1)" font-size="22.67" fill="#f0f0f0" >126,203</text>
<text transform="translate(1680.99,1128.1100000000001) scale(0.9300,1)" font-size="22.67" fill="#f0f0f0" >186,238</text>
<text transform="translate(1782.24,1128.1100000000001) scale(0.9300,1)" font-size="22.67" fill="#f0f0f0" >260,286</text>
<text transform="translate(1883.20,1128.1100000000001) scale(0.9300,1)" font-size="22.67" fill="#f0f0f0" >353,027</text>
<text transform="translate(1984.22,1128.1100000000001) scale(0.9300,1)" font-size="22.67" fill="#f0f0f0" >462,631</text>
<text transform="translate(2084.56,1128.1100000000001) scale(0.9300,1)" font-size="22.67" fill="#f0f0f0" >584,649</text>
<text transform="translate(879.58,1163.48) scale(0.9896,1)" font-size="22.67" fill="#f2f2f2" font-weight="bold" >Gamma Log/Log</text>
<text transform="translate(1076.79,1163.48) scale(0.9300,1)" font-size="22.67" fill="#f0f0f0" >1,278</text>
<text transform="translate(1178.04,1163.48) scale(0.9300,1)" font-size="22.67" fill="#f0f0f0" >2,182</text>
<text transform="translate(1278.74,1163.48) scale(0.9300,1)" font-size="22.67" fill="#f0f0f0" >2,232</text>
<text transform="translate(1379.44,1163.48) scale(0.9300,1)" font-size="22.67" fill="#f0f0f0" >2,226</text>
<text transform="translate(1480.14,1163.48) scale(0.9300,1)" font-size="22.67" fill="#f0f0f0" >2,261</text>
<text transform="translate(1580.84,1163.48) scale(0.9300,1)" font-size="22.67" fill="#f0f0f0" >2,258</text>
<text transform="translate(1681.54,1163.48) scale(0.9300,1)" font-size="22.67" fill="#f0f0f0" >2,246</text>
<text transform="translate(1782.24,1163.48) scale(0.9300,1)" font-size="22.67" fill="#f0f0f0" >2,305</text>
<text transform="translate(1882.94,1163.48) scale(0.9300,1)" font-size="22.67" fill="#f0f0f0" >2,303</text>
<text transform="translate(1983.64,1163.48) scale(0.9300,1)" font-size="22.67" fill="#f0f0f0" >2,303</text>
<text transform="translate(2084.34,1163.48) scale(0.9300,1)" font-size="22.67" fill="#f0f0f0" >2,275</text>
<text transform="translate(879.69,1198.8500000000001) scale(0.8739,1)" font-size="22.67" fill="#f2f2f2" font-weight="bold" >CCT</text>
<text transform="translate(1077.48,1198.8500000000001) scale(0.9300,1)" font-size="22.67" fill="#f0f0f0" >8747,000</text>
<text transform="translate(1178.02,1198.8500000000001) scale(0.9300,1)" font-size="22.67" fill="#f0f0f0" >7069,000</text>
<text transform="translate(1278.73,1198.8500000000001) scale(0.9300,1)" font-size="22.67" fill="#f0f0f0" >6990,000</text>
<text transform="translate(1379.43,1198.8500000000001) scale(0.9300,1)" font-size="22.67" fill="#f0f0f0" >6913,000</text>
<text transform="translate(1480.13,1198.8500000000001) scale(0.9300,1)" font-size="22.67" fill="#f0f0f0" >6991,000</text>
<text transform="translate(1580.83,1198.8500000000001) scale(0.9300,1)" font-size="22.67" fill="#f0f0f0" >6938,000</text>
<text transform="translate(1681.53,1198.8500000000001) scale(0.9300,1)" font-size="22.67" fill="#f0f0f0" >6999,000</text>
<text transform="translate(1782.23,1198.8500000000001) scale(0.9300,1)" font-size="22.67" fill="#f0f0f0" >6974,000</text>
<text transform="translate(1882.93,1198.8500000000001) scale(0.9300,1)" font-size="22.67" fill="#f0f0f0" >6982,000</text>
<text transform="translate(1983.63,1198.8500000000001) scale(0.9300,1)" font-size="22.67" fill="#f0f0f0" >6967,000</text>
<text transform="translate(2084.33,1198.8500000000001) scale(0.9300,1)" font-size="22.67" fill="#f0f0f0" >6981,000</text>
<text transform="translate(879.60,1234.22) scale(0.9836,1)" font-size="22.67" fill="#f2f2f2" font-weight="bold" >ΔE 2000</text>
<text transform="translate(1076.79,1234.22) scale(0.9300,1)" font-size="22.67" fill="#f0f0f0" >1,260</text>
<text transform="translate(1178.04,1234.22) scale(0.9300,1)" font-size="22.67" fill="#f0f0f0" >2,020</text>
<text transform="translate(1278.74,1234.22) scale(0.9300,1)" font-size="22.67" fill="#f0f0f0" >2,355</text>
<text transform="translate(1379.44,1234.22) scale(0.9300,1)" font-size="22.67" fill="#f0f0f0" >2,591</text>
<text transform="translate(1480.40,1234.22) scale(0.9300,1)" font-size="22.67" fill="#f0f0f0" >3,264</text>
<text transform="translate(1581.10,1234.22) scale(0.9300,1)" font-size="22.67" fill="#f0f0f0" >3,880</text>
<text transform="translate(1682.12,1234.22) scale(0.9300,1)" font-size="22.67" fill="#f0f0f0" >4,871</text>
<text transform="translate(1782.82,1234.22) scale(0.9300,1)" font-size="22.67" fill="#f0f0f0" >4,901</text>
<text transform="translate(1883.16,1234.22) scale(0.9300,1)" font-size="22.67" fill="#f0f0f0" >5,173</text>
<text transform="translate(1983.86,1234.22) scale(0.9300,1)" font-size="22.67" fill="#f0f0f0" >5,641</text>
<text transform="translate(2084.56,1234.22) scale(0.9300,1)" font-size="22.67" fill="#f0f0f0" >5,857</text>
<text transform="translate(1116.92,984.8) scale(1.0000,1)" font-size="20.78" fill="#ffffff" >0</text>
<text transform="translate(1211.50,984.8) scale(1.0000,1)" font-size="20.78" fill="#ffffff" >10</text>
<text transform="translate(1312.52,984.8) scale(1.0000,1)" font-size="20.78" fill="#ffffff" >20</text>
<text transform="translate(1413.40,984.8) scale(1.0000,1)" font-size="20.78" fill="#ffffff" >30</text>
<text transform="translate(1514.31,984.8) scale(1.0000,1)" font-size="20.78" fill="#ffffff" >40</text>
<text transform="translate(1614.88,984.8) scale(1.0000,1)" font-size="20.78" fill="#ffffff" >50</text>
<text transform="translate(1715.52,984.8) scale(1.0000,1)" font-size="20.78" fill="#ffffff" >60</text>
<text transform="translate(1816.26,984.8) scale(1.0000,1)" font-size="20.78" fill="#ffffff" >70</text>
<text transform="translate(1917.09,984.8) scale(1.0000,1)" font-size="20.78" fill="#ffffff" >80</text>
<text transform="translate(2017.81,984.8) scale(1.0000,1)" font-size="20.78" fill="#ffffff" >90</text>
<text transform="translate(2112.48,984.8) scale(1.0000,1)" font-size="20.78" fill="#ffffff" >100</text>
<rect x="0" y="1328.7" width="2293" height="61.3" fill="url(#barbg)" />
<rect x="0" y="1389.8" width="2293" height="1.2" fill="#1e1e1e" />
<rect x="2.1" y="1329" width="149.8" height="60.8" rx="3.5" fill="url(#btn)"/>
<rect x="6.7" y="1334" width="140.4" height="36.4" rx="3" fill="#6a6a6a" opacity="0.6"/>
<rect x="7.3" y="1334.6" width="139.4" height="35.4" rx="3" fill="#000000"/>
<text transform="translate(73.80,1385.2) scale(1.0000,1)" font-size="11.19" fill="#2a2a2a" font-weight="bold" >0</text>
<rect x="154.1" y="1329" width="149.8" height="60.8" rx="3.5" fill="url(#btn)"/>
<rect x="158.7" y="1334" width="140.4" height="36.4" rx="3" fill="#6a6a6a" opacity="0.6"/>
<rect x="159.3" y="1334.6" width="139.4" height="35.4" rx="3" fill="#1a1a1a"/>
<text transform="translate(222.58,1385.2) scale(1.0000,1)" font-size="11.19" fill="#2a2a2a" font-weight="bold" >10</text>
<rect x="306.2" y="1329" width="149.8" height="60.8" rx="3.5" fill="url(#btn)"/>
<rect x="310.8" y="1334" width="140.4" height="36.4" rx="3" fill="#6a6a6a" opacity="0.6"/>
<rect x="311.4" y="1334.6" width="139.4" height="35.4" rx="3" fill="#333333"/>
<text transform="translate(374.77,1385.2) scale(1.0000,1)" font-size="11.19" fill="#2a2a2a" font-weight="bold" >20</text>
<rect x="458.2" y="1329" width="149.8" height="60.8" rx="3.5" fill="url(#btn)"/>
<rect x="462.8" y="1334" width="140.4" height="36.4" rx="3" fill="#6a6a6a" opacity="0.6"/>
<rect x="463.4" y="1334.6" width="139.4" height="35.4" rx="3" fill="#4c4c4c"/>
<text transform="translate(526.87,1385.2) scale(1.0000,1)" font-size="11.19" fill="#2a2a2a" font-weight="bold" >30</text>
<rect x="610.2" y="1329" width="149.8" height="60.8" rx="3.5" fill="url(#btn)"/>
<rect x="614.8" y="1334" width="140.4" height="36.4" rx="3" fill="#6a6a6a" opacity="0.6"/>
<rect x="615.4" y="1334.6" width="139.4" height="35.4" rx="3" fill="#666666"/>
<text transform="translate(678.94,1385.2) scale(1.0000,1)" font-size="11.19" fill="#2a2a2a" font-weight="bold" >40</text>
<rect x="762.2" y="1329" width="149.8" height="60.8" rx="3.5" fill="url(#btn)"/>
<rect x="766.9" y="1334" width="140.4" height="36.4" rx="3" fill="#6a6a6a" opacity="0.6"/>
<rect x="767.5" y="1334.6" width="139.4" height="35.4" rx="3" fill="#808080"/>
<text transform="translate(830.88,1385.2) scale(1.0000,1)" font-size="11.19" fill="#2a2a2a" font-weight="bold" >50</text>
<rect x="914.3" y="1329" width="149.8" height="60.8" rx="3.5" fill="url(#btn)"/>
<rect x="918.9" y="1334" width="140.4" height="36.4" rx="3" fill="#6a6a6a" opacity="0.6"/>
<rect x="919.5" y="1334.6" width="139.4" height="35.4" rx="3" fill="#999999"/>
<text transform="translate(982.88,1385.2) scale(1.0000,1)" font-size="11.19" fill="#2a2a2a" font-weight="bold" >60</text>
<rect x="1066.3" y="1329" width="149.8" height="60.8" rx="3.5" fill="url(#btn)"/>
<rect x="1070.9" y="1334" width="140.4" height="36.4" rx="3" fill="#6a6a6a" opacity="0.6"/>
<rect x="1071.5" y="1334.6" width="139.4" height="35.4" rx="3" fill="#b2b2b2"/>
<text transform="translate(1134.87,1385.2) scale(1.0000,1)" font-size="11.19" fill="#2a2a2a" font-weight="bold" >70</text>
<rect x="1218.3" y="1329" width="149.8" height="60.8" rx="3.5" fill="url(#btn)"/>
<rect x="1222.9" y="1334" width="140.4" height="36.4" rx="3" fill="#6a6a6a" opacity="0.6"/>
<rect x="1223.5" y="1334.6" width="139.4" height="35.4" rx="3" fill="#cccccc"/>
<text transform="translate(1286.97,1385.2) scale(1.0000,1)" font-size="11.19" fill="#2a2a2a" font-weight="bold" >80</text>
<rect x="1370.4" y="1329" width="149.8" height="60.8" rx="3.5" fill="url(#btn)"/>
<rect x="1375.0" y="1334" width="140.4" height="36.4" rx="3" fill="#6a6a6a" opacity="0.6"/>
<rect x="1375.6" y="1334.6" width="139.4" height="35.4" rx="3" fill="#e6e6e6"/>
<text transform="translate(1438.98,1385.2) scale(1.0000,1)" font-size="11.19" fill="#2a2a2a" font-weight="bold" >90</text>
<rect x="1522.4" y="1329" width="149.8" height="60.8" rx="3.5" fill="url(#btnsel)"/>
<rect x="1527.6" y="1334.6" width="139.4" height="35.4" rx="3" fill="#ffffff"/>
<text transform="translate(1587.74,1385.2) scale(1.0000,1)" font-size="11.19" fill="#ffffff" font-weight="bold" >100</text>
<path d="M1968.8,1347 V1332.5 Q1968.8,1329 1972.3,1329 H2013.3 Q2016.8,1329 2016.8,1332.5 V1347 Z" fill="url(#tb)"/>
<path d="M1968.8,1347.5 H2016.8 V1386.5 Q2016.8,1390 2013.3,1390 H1972.3 Q1968.8,1390 1968.8,1386.5 Z" fill="url(#tb2)"/>
<rect x="1968.8" y="1346.5" width="48" height="1.2" fill="#4a4a4a" />
<circle cx="1993.4" cy="1337.7" r="6.5" fill="#7a7a7a"/>
<path d="M1989.5,1340 L1997.3,1340 L1993.4,1335.5 Z" fill="#333"/>
<rect x="1978.5" y="1354.5" width="29" height="29" rx="3" fill="#a0a0a0" stroke="#2a2a2a" stroke-width="2"/>
<rect x="1986" y="1362" width="14" height="13.5" fill="#111" />
<path d="M2018,1358.6 V1332 Q2018,1329 2021,1329 H2244 V1358.6 Z" fill="url(#tb)"/>
<rect x="2063.7000000000003" y="1329" width="1.4" height="29.6" fill="#2a2a2a" />
<rect x="2108.6000000000004" y="1329" width="1.4" height="29.6" fill="#2a2a2a" />
<rect x="2154.5" y="1329" width="1.4" height="29.6" fill="#2a2a2a" />
<rect x="2198.8" y="1329" width="1.4" height="29.6" fill="#2a2a2a" />
<circle cx="2040.5" cy="1343.6" r="9.3" fill="url(#circ)"/>
<circle cx="2086.6" cy="1343.6" r="9.3" fill="url(#circ)"/>
<circle cx="2131.9" cy="1343.6" r="9.3" fill="url(#circ)"/>
<circle cx="2177" cy="1343.6" r="9.3" fill="url(#circ)"/>
<circle cx="2221.7" cy="1343.6" r="9.3" fill="url(#circ)"/>
<rect x="2036.3" y="1339.4" width="8.4" height="8.4" fill="#2e2e2e" />
<path d="M2082.8,1338.6 L2091.3,1343.6 L2082.8,1348.6 Z" fill="#2e2e2e"/>
<path d="M2128.5,1338.5 H2126.8 V1348.7 H2128.5 M2135.3,1338.5 H2137 V1348.7 H2135.3" fill="none" stroke="#2e2e2e" stroke-width="1.5"/>
<circle cx="2130.5" cy="1343.6" r="0.9" fill="#2e2e2e"/><circle cx="2133.3" cy="1343.6" r="0.9" fill="#2e2e2e"/>
<path d="M2177,1343.6 C2174.5,1340 2171,1340.5 2171,1343.6 C2171,1346.7 2174.5,1347.2 2177,1343.6 C2179.5,1340 2183,1340.5 2183,1343.6 C2183,1346.7 2179.5,1347.2 2177,1343.6 Z" fill="none" stroke="#2e2e2e" stroke-width="1.6"/>
<path d="M2216.8,1342.5 A5,5 0 0 1 2225.5,1340.2 M2226.6,1344.7 A5,5 0 0 1 2217.9,1347" fill="none" stroke="#2e2e2e" stroke-width="1.8"/>
<path d="M2227,1337.5 L2227,1341.7 L2222.8,1341.3 Z M2216.4,1349.7 L2216.4,1345.5 L2220.6,1345.9 Z" fill="#2e2e2e"/>
<rect x="2244" y="1329" width="46" height="29.6" fill="url(#dk)" />
<circle cx="2267.9" cy="1343.6" r="9.5" fill="#2c2c2c"/>
<path d="M2018,1364 Q2018,1360.1 2021.5,1360.1 H2286.8 Q2290.3,1360.1 2290.3,1364 V1389.8 H2018 Z" fill="url(#tb)"/>
<rect x="2153.5" y="1360.1" width="1.4" height="29.7" fill="#2a2a2a" />
<circle cx="2048.7" cy="1375" r="9.3" fill="url(#circ)"/>
<circle cx="2261.9" cy="1375" r="9.3" fill="url(#circ)"/>
<path d="M2049,1370.5 L2045,1375 L2049,1379.5 M2053,1370.5 L2049,1375 L2053,1379.5" fill="none" stroke="#2e2e2e" stroke-width="1.5"/>
<path d="M2258,1370.5 L2262,1375 L2258,1379.5 M2262,1370.5 L2266,1375 L2262,1379.5" fill="none" stroke="#2e2e2e" stroke-width="1.5"/>
<text transform="translate(2074.26,1382.8) scale(0.9755,1)" font-size="22.09" fill="#2a2a2a" font-weight="bold" >Back</text>
<text transform="translate(2180.97,1382.8) scale(1.1032,1)" font-size="22.09" fill="#2a2a2a" font-weight="bold" >Next</text>
<rect x="2286.5" y="96" width="5.5" height="1232" fill="url(#rshadow)" />
<rect x="1" y="96" width="1" height="1294" fill="#1e1e1e" />
<rect x="0" y="0" width="1" height="1392" fill="#8c8c8c" />
<rect x="2292" y="0" width="1" height="1392" fill="#8c8c8c" />
<rect x="0" y="1391" width="2293" height="1" fill="#8c8c8c" />
</svg>
</body></html>
